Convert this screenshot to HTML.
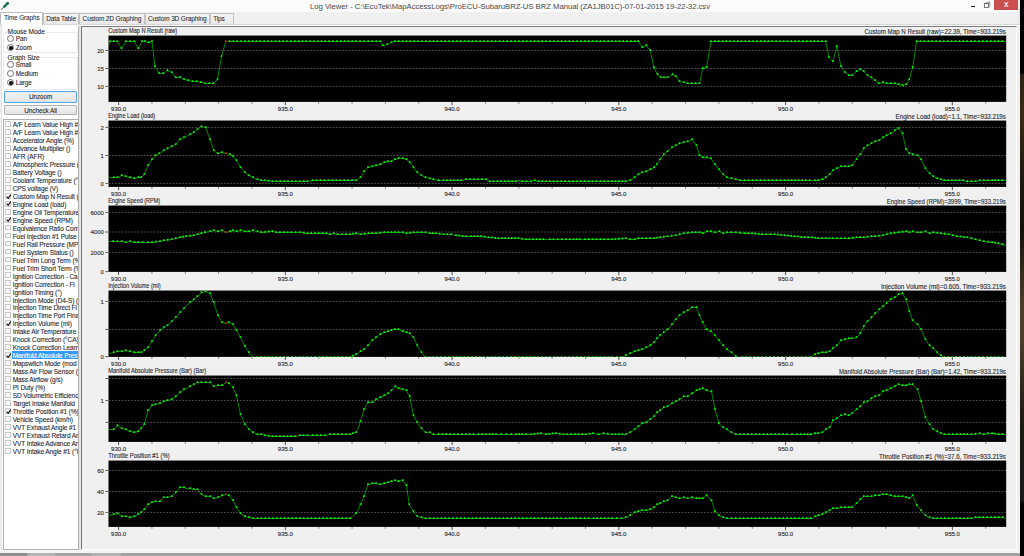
<!DOCTYPE html>
<html><head><meta charset="utf-8"><title>Log Viewer</title>
<style>
html,body{margin:0;padding:0}
body{width:1024px;height:556px;overflow:hidden;position:relative;background:#f0f0f0;font-family:"Liberation Sans",sans-serif;font-size:6.2px;color:#2a2a30}
div,span{box-sizing:border-box}
.abs{position:absolute}
#titlebar{left:0;top:0;width:1020px;height:11.5px;background:#fbfbfb}
#title{left:0;top:1.9px;width:1020px;text-align:center;font-size:7.75px;color:#4a4a4a;letter-spacing:-0.06px;white-space:nowrap}
#close{left:994.2px;top:0;width:23.7px;height:9.7px;background:#c9504f;color:#f8e4e4;text-align:center;font-size:8.2px;line-height:9.4px;font-weight:bold;padding-left:0.6px}
#wall{left:1019.9px;top:0;width:4.2px;height:556px;background:linear-gradient(#000 0,#000 73px,#2a2216 75px,#3a2c16 115px,#1c1812 180px,#14110c 230px,#4a3c2a 300px,#4a3d2c 340px,#1e1b15 420px,#1a1a1a 500px,#000 505px,#000 556px)}
#wborder{left:1017.6px;top:0;width:2.4px;height:553.2px;background:linear-gradient(90deg,#f2f2f2,#e0e0e0)}
#taskbar{left:0;top:553.2px;width:1020px;height:3px;background:linear-gradient(90deg,#8e8e8e 0,#8e8e8e 27px,#b4b4b4 28px,#b4b4b4 54px,#a4a4a4 56px,#a4a4a4 91px,#b2b2b2 92px,#b2b2b2 120px,#a2a2a2 122px)}
#wbottom{left:0;top:550px;width:1020px;height:3.2px;background:#f4f4f4}
.tab{top:13.3px;height:10.4px;border:0.6px solid #c2c2c2;border-bottom:none;background:linear-gradient(#f3f3f3,#e9e9e9);white-space:nowrap;text-align:center;line-height:9.8px;font-size:6.5px;letter-spacing:-0.14px;-webkit-text-stroke:0.06px #2a2a30}
.tab.on{top:12px;height:12.6px;background:#fff;border-color:#bcbcbc;line-height:9.6px}
#page{left:0.5px;top:24.2px;width:1019px;height:526px;background:#fff;border-left:0.6px solid #e0e0e0}
#split{left:78.1px;top:26.1px;width:3.2px;height:524.1px;background:linear-gradient(90deg,#b0b0b0 0,#b8b8b8 1px,#e2e2e2 1.2px,#e8e8e8 2.5px,#fcfcfc 2.6px)}
#rfill{left:1017px;top:26.1px;width:3px;height:524.1px;background:#f0f0f0}
#tabline{left:43px;top:23.6px;width:977px;height:0.6px;background:#d8d8d8}
#panel{left:81.3px;top:26.2px;width:936px;height:523.9px;border-left:0.9px solid #747474;border-top:0.9px solid #7c7c7c;border-right:0.8px solid #fdfdfd;border-bottom:0.8px solid #fdfdfd;background:#f0f0f0}
.grp{left:3.4px;width:75px;border:0.6px solid #e9e9e9;border-radius:1px}
.gl{background:#fff;padding:0 0.8px;font-size:6.6px;letter-spacing:-0.1px;white-space:nowrap;line-height:7px;-webkit-text-stroke:0.1px #2a2a30}
.rad{width:7px;height:7px;border-radius:50%;border:0.6px solid #707070;background:#fff}
  .rad.on::after{content:"";position:absolute;left:1.15px;top:1.15px;width:3.5px;height:3.5px;border-radius:50%;background:#111}
.rl{font-size:6.4px;letter-spacing:-0.1px;line-height:7px;white-space:nowrap;-webkit-text-stroke:0.1px #2a2a30}
.btn{left:4.2px;width:72.8px;border:0.6px solid #b2b2b2;background:linear-gradient(#f3f3f3,#e4e4e4);text-align:center;font-size:6.4px;letter-spacing:-0.08px;border-radius:1px;-webkit-text-stroke:0.1px #2a2a30}
.lb{position:absolute;left:2.6px;top:118.6px;width:76px;height:431.4px;border:0.8px solid #b0b0b0;background:#fff;overflow:hidden;padding-top:0.6px}
.it{height:7.98px;position:relative;white-space:nowrap}
.cb{position:absolute;left:1.9px;top:0.9px;width:5.8px;height:5.8px;border:0.55px solid #c8c8c8;background:#fff;line-height:0}
.cb svg{position:absolute;left:-0.3px;top:-0.3px}
.tx{position:absolute;left:8.3px;top:0;height:7.98px;line-height:9.1px;font-size:6.55px;letter-spacing:-0.1px;padding:0 0.8px;-webkit-text-stroke:0.1px #2a2a30}
.tx.sel{background:#3399ff;color:#fff;-webkit-text-stroke:0.1px #fff;left:8.4px;padding-left:0.7px;right:0;overflow:hidden}
.gsvg{position:absolute;left:0;top:0}
.gsvg text{stroke:#303038;stroke-width:0.14px}
</style></head><body>
<div id="titlebar" class="abs"></div>
<svg class="abs" style="left:0;top:0" width="11" height="11" viewBox="0 0 11 11"><path d="M1.4 9.7 L3.3 7.4" stroke="#222" stroke-width="0.9" fill="none"/><path d="M3 7.6 L3.1 6.1 L6.4 2.4 L8.2 2 L9 3.6 L5.9 7.1 L4.3 7.9 Z" fill="#1d7a5c"/><path d="M6.5 2.3 L8.2 2 L9 3.6 L8 4.7 Z" fill="#2a4038"/></svg>
<div id="title" class="abs">Log Viewer - C:\EcuTek\MapAccessLogs\ProECU-SubaruBRZ-US BRZ Manual (ZA1JB01C)-07-01-2015 19-22-32.csv</div>
<div class="abs" style="left:970.9px;top:5.9px;width:4.1px;height:1.1px;background:#1c1c1c"></div>
<svg class="abs" style="left:982px;top:0" width="10" height="10" viewBox="0 0 10 10"><path d="M3.5 3.4 L4.7 2.3 L7.8 2.3 L7.8 6.4 L6.6 7.5" fill="none" stroke="#555" stroke-width="0.6"/><path d="M6.5 3.4 L7.8 2.3" stroke="#666" stroke-width="0.5"/><rect x="2.3" y="3.5" width="4.2" height="4" fill="#fdfdfd" stroke="#3c3c3c" stroke-width="0.7"/></svg>
<div id="close" class="abs">x</div>
<div id="wborder" class="abs"></div>
<div id="wall" class="abs"></div>
<div id="wbottom" class="abs"></div>
<div id="taskbar" class="abs"></div>

<div id="page" class="abs"></div><div id="split" class="abs"></div><div id="rfill" class="abs"></div>
<div id="tabline" class="abs"></div>
<div class="abs tab" style="left:43px;width:36.2px">Data Table</div>
<div class="abs tab" style="left:79.2px;width:65.4px">Custom 2D Graphing</div>
<div class="abs tab" style="left:144.6px;width:65.2px">Custom 3D Graphing</div>
<div class="abs tab" style="left:209.8px;width:23.8px;padding-right:5.5px">Tips</div>
<div class="abs tab on" style="left:0.2px;width:43.2px">Time Graphs</div>

<div class="abs grp" style="top:31.6px;height:21px"></div>
<div class="abs gl" style="left:6.8px;top:27.6px">Mouse Mode</div>
<div class="abs rad" style="left:7.1px;top:35.3px"></div><div class="abs rl" style="left:15.8px;top:35px">Pan</div>
<div class="abs rad on" style="left:7.1px;top:43.9px"></div><div class="abs rl" style="left:15.8px;top:43.6px">Zoom</div>
<div class="abs grp" style="top:57.2px;height:32.4px"></div>
<div class="abs gl" style="left:6.8px;top:54px">Graph Size</div>
<div class="abs rad" style="left:7.1px;top:61.4px"></div><div class="abs rl" style="left:15.8px;top:61.1px">Small</div>
<div class="abs rad" style="left:7.1px;top:69.9px"></div><div class="abs rl" style="left:15.8px;top:69.6px">Medium</div>
<div class="abs rad on" style="left:7.1px;top:79.1px"></div><div class="abs rl" style="left:15.8px;top:78.8px">Large</div>
<div class="abs btn" style="top:91.4px;height:11.2px;line-height:10.4px;border-color:#5aa7e8;box-shadow:inset 0 0 0 0.5px #bfe0fa">Unzoom</div>
<div class="abs btn" style="top:105.2px;height:9.8px;line-height:9px">Uncheck All</div>
<div class="lb">
<div class="it"><span class="cb"></span><span class="tx">A/F Learn Value High #</span></div>
<div class="it"><span class="cb"></span><span class="tx">A/F Learn Value High #</span></div>
<div class="it"><span class="cb"></span><span class="tx">Accelerator Angle (%)</span></div>
<div class="it"><span class="cb"></span><span class="tx">Advance Multiplier ()</span></div>
<div class="it"><span class="cb"></span><span class="tx">AFR (AFR)</span></div>
<div class="it"><span class="cb"></span><span class="tx">Atmospheric Pressure (</span></div>
<div class="it"><span class="cb"></span><span class="tx">Battery Voltage ()</span></div>
<div class="it"><span class="cb"></span><span class="tx">Coolant Temperature (°</span></div>
<div class="it"><span class="cb"></span><span class="tx">CPS voltage (V)</span></div>
<div class="it"><span class="cb"><svg viewBox="0 0 7 7" width="5.4" height="5.4"><path d="M0.9 3.3 L2.8 5.6 L6.3 0.9" fill="none" stroke="#111" stroke-width="1.5"/></svg></span><span class="tx">Custom Map N Result (</span></div>
<div class="it"><span class="cb"><svg viewBox="0 0 7 7" width="5.4" height="5.4"><path d="M0.9 3.3 L2.8 5.6 L6.3 0.9" fill="none" stroke="#111" stroke-width="1.5"/></svg></span><span class="tx">Engine Load (load)</span></div>
<div class="it"><span class="cb"></span><span class="tx">Engine Oil Temperature</span></div>
<div class="it"><span class="cb"><svg viewBox="0 0 7 7" width="5.4" height="5.4"><path d="M0.9 3.3 L2.8 5.6 L6.3 0.9" fill="none" stroke="#111" stroke-width="1.5"/></svg></span><span class="tx">Engine Speed (RPM)</span></div>
<div class="it"><span class="cb"></span><span class="tx">Equivalence Ratio Com</span></div>
<div class="it"><span class="cb"></span><span class="tx">Fuel Injection #1 Pulse</span></div>
<div class="it"><span class="cb"></span><span class="tx">Fuel Rail Pressure (MPa</span></div>
<div class="it"><span class="cb"></span><span class="tx">Fuel System Status ()</span></div>
<div class="it"><span class="cb"></span><span class="tx">Fuel Trim Long Term (%</span></div>
<div class="it"><span class="cb"></span><span class="tx">Fuel Trim Short Term (%</span></div>
<div class="it"><span class="cb"></span><span class="tx">Ignition Correction - Ca</span></div>
<div class="it"><span class="cb"></span><span class="tx">Ignition Correction - Fi</span></div>
<div class="it"><span class="cb"></span><span class="tx">Ignition Timing (°)</span></div>
<div class="it"><span class="cb"></span><span class="tx">Injection Mode (D4-S) (</span></div>
<div class="it"><span class="cb"></span><span class="tx">Injection Time Direct Fi</span></div>
<div class="it"><span class="cb"></span><span class="tx">Injection Time Port Fina</span></div>
<div class="it"><span class="cb"><svg viewBox="0 0 7 7" width="5.4" height="5.4"><path d="M0.9 3.3 L2.8 5.6 L6.3 0.9" fill="none" stroke="#111" stroke-width="1.5"/></svg></span><span class="tx">Injection Volume (ml)</span></div>
<div class="it"><span class="cb"></span><span class="tx">Intake Air Temperature</span></div>
<div class="it"><span class="cb"></span><span class="tx">Knock Correction (°CA)</span></div>
<div class="it"><span class="cb"></span><span class="tx">Knock Correction Learn</span></div>
<div class="it"><span class="cb"><svg viewBox="0 0 7 7" width="5.4" height="5.4"><path d="M0.9 3.3 L2.8 5.6 L6.3 0.9" fill="none" stroke="#111" stroke-width="1.5"/></svg></span><span class="tx sel">Manifold Absolute Pres</span></div>
<div class="it"><span class="cb"></span><span class="tx">Mapswitch Mode (mod</span></div>
<div class="it"><span class="cb"></span><span class="tx">Mass Air Flow Sensor (V</span></div>
<div class="it"><span class="cb"></span><span class="tx">Mass Airflow (g/s)</span></div>
<div class="it"><span class="cb"></span><span class="tx">PI Duty (%)</span></div>
<div class="it"><span class="cb"></span><span class="tx">SD Volumetric Efficienc</span></div>
<div class="it"><span class="cb"></span><span class="tx">Target Intake Manifold</span></div>
<div class="it"><span class="cb"><svg viewBox="0 0 7 7" width="5.4" height="5.4"><path d="M0.9 3.3 L2.8 5.6 L6.3 0.9" fill="none" stroke="#111" stroke-width="1.5"/></svg></span><span class="tx">Throttle Position #1 (%)</span></div>
<div class="it"><span class="cb"></span><span class="tx">Vehicle Speed (km/h)</span></div>
<div class="it"><span class="cb"></span><span class="tx">VVT Exhaust Angle #1 (</span></div>
<div class="it"><span class="cb"></span><span class="tx">VVT Exhaust Retard Ang</span></div>
<div class="it"><span class="cb"></span><span class="tx">VVT Intake Advance An</span></div>
<div class="it"><span class="cb"></span><span class="tx">VVT Intake Angle #1 (°F</span></div>
</div>
<div id="panel" class="abs"></div>
<svg class="gsvg" width="1024" height="556" viewBox="0 0 1024 556" font-family="'Liberation Sans',sans-serif" font-size="6">
<rect x="108.5" y="35.55" width="897.70" height="66.35" fill="#000"/>
<line x1="108.5" x2="1006.2" y1="50.45" y2="50.45" stroke="#848484" stroke-width="0.62" stroke-dasharray="1.75 1.45"/>
<line x1="105.3" x2="108.5" y1="50.45" y2="50.45" stroke="#151515" stroke-width="0.65"/>
<text x="103.9" y="52.55" text-anchor="end" fill="#303038">20</text>
<line x1="108.5" x2="1006.2" y1="68.5" y2="68.5" stroke="#848484" stroke-width="0.62" stroke-dasharray="1.75 1.45"/>
<line x1="105.3" x2="108.5" y1="68.5" y2="68.5" stroke="#151515" stroke-width="0.65"/>
<text x="103.9" y="70.60" text-anchor="end" fill="#303038">15</text>
<line x1="108.5" x2="1006.2" y1="86.4" y2="86.4" stroke="#848484" stroke-width="0.62" stroke-dasharray="1.75 1.45"/>
<line x1="105.3" x2="108.5" y1="86.4" y2="86.4" stroke="#151515" stroke-width="0.65"/>
<text x="103.9" y="88.50" text-anchor="end" fill="#303038">10</text>
<line x1="118.60" x2="118.60" y1="101.90" y2="105.10" stroke="#1c1c1c" stroke-width="0.75"/>
<text x="118.60" y="111.30" text-anchor="middle" fill="#303038">930.0</text>
<line x1="151.95" x2="151.95" y1="101.90" y2="103.80" stroke="#383838" stroke-width="0.6"/>
<line x1="185.30" x2="185.30" y1="101.90" y2="103.80" stroke="#383838" stroke-width="0.6"/>
<line x1="218.65" x2="218.65" y1="101.90" y2="103.80" stroke="#383838" stroke-width="0.6"/>
<line x1="252.00" x2="252.00" y1="101.90" y2="103.80" stroke="#383838" stroke-width="0.6"/>
<line x1="285.35" x2="285.35" y1="101.90" y2="105.10" stroke="#1c1c1c" stroke-width="0.75"/>
<text x="285.35" y="111.30" text-anchor="middle" fill="#303038">935.0</text>
<line x1="318.70" x2="318.70" y1="101.90" y2="103.80" stroke="#383838" stroke-width="0.6"/>
<line x1="352.05" x2="352.05" y1="101.90" y2="103.80" stroke="#383838" stroke-width="0.6"/>
<line x1="385.40" x2="385.40" y1="101.90" y2="103.80" stroke="#383838" stroke-width="0.6"/>
<line x1="418.75" x2="418.75" y1="101.90" y2="103.80" stroke="#383838" stroke-width="0.6"/>
<line x1="452.10" x2="452.10" y1="101.90" y2="105.10" stroke="#1c1c1c" stroke-width="0.75"/>
<text x="452.10" y="111.30" text-anchor="middle" fill="#303038">940.0</text>
<line x1="485.45" x2="485.45" y1="101.90" y2="103.80" stroke="#383838" stroke-width="0.6"/>
<line x1="518.80" x2="518.80" y1="101.90" y2="103.80" stroke="#383838" stroke-width="0.6"/>
<line x1="552.15" x2="552.15" y1="101.90" y2="103.80" stroke="#383838" stroke-width="0.6"/>
<line x1="585.50" x2="585.50" y1="101.90" y2="103.80" stroke="#383838" stroke-width="0.6"/>
<line x1="618.85" x2="618.85" y1="101.90" y2="105.10" stroke="#1c1c1c" stroke-width="0.75"/>
<text x="618.85" y="111.30" text-anchor="middle" fill="#303038">945.0</text>
<line x1="652.20" x2="652.20" y1="101.90" y2="103.80" stroke="#383838" stroke-width="0.6"/>
<line x1="685.55" x2="685.55" y1="101.90" y2="103.80" stroke="#383838" stroke-width="0.6"/>
<line x1="718.90" x2="718.90" y1="101.90" y2="103.80" stroke="#383838" stroke-width="0.6"/>
<line x1="752.25" x2="752.25" y1="101.90" y2="103.80" stroke="#383838" stroke-width="0.6"/>
<line x1="785.60" x2="785.60" y1="101.90" y2="105.10" stroke="#1c1c1c" stroke-width="0.75"/>
<text x="785.60" y="111.30" text-anchor="middle" fill="#303038">950.0</text>
<line x1="818.95" x2="818.95" y1="101.90" y2="103.80" stroke="#383838" stroke-width="0.6"/>
<line x1="852.30" x2="852.30" y1="101.90" y2="103.80" stroke="#383838" stroke-width="0.6"/>
<line x1="885.65" x2="885.65" y1="101.90" y2="103.80" stroke="#383838" stroke-width="0.6"/>
<line x1="919.00" x2="919.00" y1="101.90" y2="103.80" stroke="#383838" stroke-width="0.6"/>
<line x1="952.35" x2="952.35" y1="101.90" y2="105.10" stroke="#1c1c1c" stroke-width="0.75"/>
<text x="952.35" y="111.30" text-anchor="middle" fill="#303038">955.0</text>
<line x1="985.70" x2="985.70" y1="101.90" y2="103.80" stroke="#383838" stroke-width="0.6"/>
<text x="108.2" y="32.95" font-size="6.6" fill="#303038" textLength="69" lengthAdjust="spacingAndGlyphs">Custom Map N Result (raw)</text>
<text x="1005.90" y="33.55" font-size="6.6" text-anchor="end" fill="#303038" textLength="141.4" lengthAdjust="spacingAndGlyphs">Custom Map N Result (raw)=22.39, Time=933.219s</text>
<clipPath id="cp0"><rect x="108.5" y="35.55" width="897.70" height="66.35"/></clipPath>
<g clip-path="url(#cp0)">
<polyline points="108.75,45.5 110.0,41.5 117.5,41.5 121.5,48.5 125.75,41.5 130.0,41.5 134.25,41.5 138.25,48.5 142.0,41.5 145.0,41.5 146.75,42.5 148.75,42.5 152.0,41.5 155.0,66.5 159.25,73.5 163.25,73.5 167.5,70.5 171.75,72.5 175.75,77.5 180.0,77.5 184.0,79.5 188.25,80.5 192.5,81.5 196.5,81.5 200.75,82.5 205.0,83.5 213.25,83.5 217.5,79.5 221.5,56.5 225.75,41.5 356.0,41.5 380.25,41.5 383.0,45.5 387.25,44.5 391.5,42.5 394.75,41.5 612.0,41.5 638.25,41.5 642.25,47.5 646.25,45.5 650.25,50.5 654.0,67.5 657.5,74.5 660.75,77.5 664.0,77.5 667.5,77.5 672.5,74.5 675.75,76.5 679.5,81.5 683.75,82.5 687.75,83.5 699.5,83.5 702.75,68.5 706.5,67.5 711.0,41.5 825.75,41.5 828.98,57.5 832.91,61.5 836.84,46.5 840.99,66.5 845.13,72.5 848.85,75.5 851.96,75.5 856.51,71.5 860.24,69.5 863.76,71.5 867.49,75.5 871.42,77.5 875.15,80.5 878.87,83.5 883.01,82.5 886.53,83.5 894.82,83.5 898.54,84.5 902.48,85.5 906.2,84.5 909.31,79.5 912.62,67.5 916.55,41.5 1006.2,41.5" fill="none" stroke="#00f000" stroke-width="0.56" stroke-linejoin="round"/>
<path d="M109.18 40.25h1.64v1.75h-1.64zM112.93 40.25h1.64v1.75h-1.64zM116.68 40.25h1.64v1.75h-1.64zM120.68 47.25h1.64v1.75h-1.64zM124.93 40.25h1.64v1.75h-1.64zM129.18 40.25h1.64v1.75h-1.64zM133.43 40.25h1.64v1.75h-1.64zM137.43 47.25h1.64v1.75h-1.64zM141.18 40.25h1.64v1.75h-1.64zM144.18 40.25h1.64v1.75h-1.64zM147.93 41.25h1.64v1.75h-1.64zM151.18 40.25h1.64v1.75h-1.64zM154.18 65.25h1.64v1.75h-1.64zM158.43 72.25h1.64v1.75h-1.64zM162.43 72.25h1.64v1.75h-1.64zM166.68 69.25h1.64v1.75h-1.64zM170.93 71.25h1.64v1.75h-1.64zM174.93 76.25h1.64v1.75h-1.64zM179.18 76.25h1.64v1.75h-1.64zM183.18 78.25h1.64v1.75h-1.64zM187.43 79.25h1.64v1.75h-1.64zM191.68 80.25h1.64v1.75h-1.64zM195.68 80.25h1.64v1.75h-1.64zM199.93 81.25h1.64v1.75h-1.64zM204.18 82.25h1.64v1.75h-1.64zM208.31 82.25h1.64v1.75h-1.64zM212.43 82.25h1.64v1.75h-1.64zM216.68 78.25h1.64v1.75h-1.64zM220.68 55.25h1.64v1.75h-1.64zM228.76 40.25h1.64v1.75h-1.64zM232.59 40.25h1.64v1.75h-1.64zM236.42 40.25h1.64v1.75h-1.64zM240.25 40.25h1.64v1.75h-1.64zM244.08 40.25h1.64v1.75h-1.64zM247.92 40.25h1.64v1.75h-1.64zM251.75 40.25h1.64v1.75h-1.64zM255.58 40.25h1.64v1.75h-1.64zM259.41 40.25h1.64v1.75h-1.64zM263.24 40.25h1.64v1.75h-1.64zM267.07 40.25h1.64v1.75h-1.64zM270.90 40.25h1.64v1.75h-1.64zM274.73 40.25h1.64v1.75h-1.64zM278.56 40.25h1.64v1.75h-1.64zM282.39 40.25h1.64v1.75h-1.64zM286.22 40.25h1.64v1.75h-1.64zM290.06 40.25h1.64v1.75h-1.64zM293.89 40.25h1.64v1.75h-1.64zM297.72 40.25h1.64v1.75h-1.64zM301.55 40.25h1.64v1.75h-1.64zM305.38 40.25h1.64v1.75h-1.64zM309.21 40.25h1.64v1.75h-1.64zM313.04 40.25h1.64v1.75h-1.64zM316.87 40.25h1.64v1.75h-1.64zM320.70 40.25h1.64v1.75h-1.64zM324.53 40.25h1.64v1.75h-1.64zM328.36 40.25h1.64v1.75h-1.64zM332.19 40.25h1.64v1.75h-1.64zM336.03 40.25h1.64v1.75h-1.64zM339.86 40.25h1.64v1.75h-1.64zM343.69 40.25h1.64v1.75h-1.64zM347.52 40.25h1.64v1.75h-1.64zM351.35 40.25h1.64v1.75h-1.64zM355.18 40.25h1.64v1.75h-1.64zM359.22 40.25h1.64v1.75h-1.64zM363.26 40.25h1.64v1.75h-1.64zM367.31 40.25h1.64v1.75h-1.64zM371.35 40.25h1.64v1.75h-1.64zM375.39 40.25h1.64v1.75h-1.64zM379.43 40.25h1.64v1.75h-1.64zM382.18 44.25h1.64v1.75h-1.64zM386.43 43.25h1.64v1.75h-1.64zM390.68 41.25h1.64v1.75h-1.64zM393.93 40.25h1.64v1.75h-1.64zM397.81 40.25h1.64v1.75h-1.64zM401.69 40.25h1.64v1.75h-1.64zM405.57 40.25h1.64v1.75h-1.64zM409.45 40.25h1.64v1.75h-1.64zM413.33 40.25h1.64v1.75h-1.64zM417.21 40.25h1.64v1.75h-1.64zM421.09 40.25h1.64v1.75h-1.64zM424.97 40.25h1.64v1.75h-1.64zM428.85 40.25h1.64v1.75h-1.64zM432.72 40.25h1.64v1.75h-1.64zM436.60 40.25h1.64v1.75h-1.64zM440.48 40.25h1.64v1.75h-1.64zM444.36 40.25h1.64v1.75h-1.64zM448.24 40.25h1.64v1.75h-1.64zM452.12 40.25h1.64v1.75h-1.64zM456.00 40.25h1.64v1.75h-1.64zM459.88 40.25h1.64v1.75h-1.64zM463.76 40.25h1.64v1.75h-1.64zM467.64 40.25h1.64v1.75h-1.64zM471.52 40.25h1.64v1.75h-1.64zM475.40 40.25h1.64v1.75h-1.64zM479.28 40.25h1.64v1.75h-1.64zM483.16 40.25h1.64v1.75h-1.64zM487.04 40.25h1.64v1.75h-1.64zM490.92 40.25h1.64v1.75h-1.64zM494.80 40.25h1.64v1.75h-1.64zM498.68 40.25h1.64v1.75h-1.64zM502.56 40.25h1.64v1.75h-1.64zM506.43 40.25h1.64v1.75h-1.64zM510.31 40.25h1.64v1.75h-1.64zM514.19 40.25h1.64v1.75h-1.64zM518.07 40.25h1.64v1.75h-1.64zM521.95 40.25h1.64v1.75h-1.64zM525.83 40.25h1.64v1.75h-1.64zM529.71 40.25h1.64v1.75h-1.64zM533.59 40.25h1.64v1.75h-1.64zM537.47 40.25h1.64v1.75h-1.64zM541.35 40.25h1.64v1.75h-1.64zM545.23 40.25h1.64v1.75h-1.64zM549.11 40.25h1.64v1.75h-1.64zM552.99 40.25h1.64v1.75h-1.64zM556.87 40.25h1.64v1.75h-1.64zM560.75 40.25h1.64v1.75h-1.64zM564.63 40.25h1.64v1.75h-1.64zM568.51 40.25h1.64v1.75h-1.64zM572.39 40.25h1.64v1.75h-1.64zM576.26 40.25h1.64v1.75h-1.64zM580.14 40.25h1.64v1.75h-1.64zM584.02 40.25h1.64v1.75h-1.64zM587.90 40.25h1.64v1.75h-1.64zM591.78 40.25h1.64v1.75h-1.64zM595.66 40.25h1.64v1.75h-1.64zM599.54 40.25h1.64v1.75h-1.64zM603.42 40.25h1.64v1.75h-1.64zM607.30 40.25h1.64v1.75h-1.64zM611.18 40.25h1.64v1.75h-1.64zM614.93 40.25h1.64v1.75h-1.64zM618.68 40.25h1.64v1.75h-1.64zM622.43 40.25h1.64v1.75h-1.64zM626.18 40.25h1.64v1.75h-1.64zM629.93 40.25h1.64v1.75h-1.64zM633.68 40.25h1.64v1.75h-1.64zM637.43 40.25h1.64v1.75h-1.64zM641.43 46.25h1.64v1.75h-1.64zM645.43 44.25h1.64v1.75h-1.64zM649.43 49.25h1.64v1.75h-1.64zM653.18 66.25h1.64v1.75h-1.64zM656.68 73.25h1.64v1.75h-1.64zM659.93 76.25h1.64v1.75h-1.64zM663.18 76.25h1.64v1.75h-1.64zM666.68 76.25h1.64v1.75h-1.64zM671.68 73.25h1.64v1.75h-1.64zM674.93 75.25h1.64v1.75h-1.64zM678.68 80.25h1.64v1.75h-1.64zM682.93 81.25h1.64v1.75h-1.64zM686.93 82.25h1.64v1.75h-1.64zM690.85 82.25h1.64v1.75h-1.64zM694.76 82.25h1.64v1.75h-1.64zM698.68 82.25h1.64v1.75h-1.64zM701.93 67.25h1.64v1.75h-1.64zM705.68 66.25h1.64v1.75h-1.64zM710.18 40.25h1.64v1.75h-1.64zM714.00 40.25h1.64v1.75h-1.64zM717.83 40.25h1.64v1.75h-1.64zM721.65 40.25h1.64v1.75h-1.64zM725.48 40.25h1.64v1.75h-1.64zM729.30 40.25h1.64v1.75h-1.64zM733.13 40.25h1.64v1.75h-1.64zM736.95 40.25h1.64v1.75h-1.64zM740.78 40.25h1.64v1.75h-1.64zM744.60 40.25h1.64v1.75h-1.64zM748.43 40.25h1.64v1.75h-1.64zM752.25 40.25h1.64v1.75h-1.64zM756.08 40.25h1.64v1.75h-1.64zM759.90 40.25h1.64v1.75h-1.64zM763.73 40.25h1.64v1.75h-1.64zM767.55 40.25h1.64v1.75h-1.64zM771.38 40.25h1.64v1.75h-1.64zM775.20 40.25h1.64v1.75h-1.64zM779.03 40.25h1.64v1.75h-1.64zM782.85 40.25h1.64v1.75h-1.64zM786.68 40.25h1.64v1.75h-1.64zM790.50 40.25h1.64v1.75h-1.64zM794.33 40.25h1.64v1.75h-1.64zM798.15 40.25h1.64v1.75h-1.64zM801.98 40.25h1.64v1.75h-1.64zM805.80 40.25h1.64v1.75h-1.64zM809.63 40.25h1.64v1.75h-1.64zM813.45 40.25h1.64v1.75h-1.64zM817.28 40.25h1.64v1.75h-1.64zM821.10 40.25h1.64v1.75h-1.64zM824.93 40.25h1.64v1.75h-1.64zM828.16 56.25h1.64v1.75h-1.64zM832.09 60.25h1.64v1.75h-1.64zM836.02 45.25h1.64v1.75h-1.64zM840.17 65.25h1.64v1.75h-1.64zM844.31 71.25h1.64v1.75h-1.64zM848.03 74.25h1.64v1.75h-1.64zM851.14 74.25h1.64v1.75h-1.64zM855.69 70.25h1.64v1.75h-1.64zM859.42 68.25h1.64v1.75h-1.64zM862.94 70.25h1.64v1.75h-1.64zM866.67 74.25h1.64v1.75h-1.64zM870.60 76.25h1.64v1.75h-1.64zM874.33 79.25h1.64v1.75h-1.64zM878.05 82.25h1.64v1.75h-1.64zM882.19 81.25h1.64v1.75h-1.64zM885.71 82.25h1.64v1.75h-1.64zM889.85 82.25h1.64v1.75h-1.64zM894.00 82.25h1.64v1.75h-1.64zM897.72 83.25h1.64v1.75h-1.64zM901.66 84.25h1.64v1.75h-1.64zM905.38 83.25h1.64v1.75h-1.64zM908.49 78.25h1.64v1.75h-1.64zM911.80 66.25h1.64v1.75h-1.64zM915.73 40.25h1.64v1.75h-1.64zM919.63 40.25h1.64v1.75h-1.64zM923.53 40.25h1.64v1.75h-1.64zM927.42 40.25h1.64v1.75h-1.64zM931.32 40.25h1.64v1.75h-1.64zM935.22 40.25h1.64v1.75h-1.64zM939.12 40.25h1.64v1.75h-1.64zM943.01 40.25h1.64v1.75h-1.64zM946.91 40.25h1.64v1.75h-1.64zM950.81 40.25h1.64v1.75h-1.64zM954.71 40.25h1.64v1.75h-1.64zM958.61 40.25h1.64v1.75h-1.64zM962.50 40.25h1.64v1.75h-1.64zM966.40 40.25h1.64v1.75h-1.64zM970.30 40.25h1.64v1.75h-1.64zM974.20 40.25h1.64v1.75h-1.64zM978.10 40.25h1.64v1.75h-1.64zM981.99 40.25h1.64v1.75h-1.64zM985.89 40.25h1.64v1.75h-1.64zM989.79 40.25h1.64v1.75h-1.64zM993.69 40.25h1.64v1.75h-1.64zM997.58 40.25h1.64v1.75h-1.64zM1001.48 40.25h1.64v1.75h-1.64z" fill="#00ff00"/>
<rect x="224.80" y="40.10" width="1.9" height="1.9" fill="#b01a0a"/>
</g>
<rect x="108.5" y="120.55" width="897.70" height="66.35" fill="#000"/>
<line x1="108.5" x2="1006.2" y1="127.4" y2="127.4" stroke="#848484" stroke-width="0.62" stroke-dasharray="1.75 1.45"/>
<line x1="105.3" x2="108.5" y1="127.4" y2="127.4" stroke="#151515" stroke-width="0.65"/>
<text x="103.9" y="129.50" text-anchor="end" fill="#303038">2</text>
<line x1="108.5" x2="1006.2" y1="155.5" y2="155.5" stroke="#848484" stroke-width="0.62" stroke-dasharray="1.75 1.45"/>
<line x1="105.3" x2="108.5" y1="155.5" y2="155.5" stroke="#151515" stroke-width="0.65"/>
<text x="103.9" y="157.60" text-anchor="end" fill="#303038">1</text>
<line x1="108.5" x2="1006.2" y1="183.45" y2="183.45" stroke="#848484" stroke-width="0.62" stroke-dasharray="1.75 1.45"/>
<line x1="105.3" x2="108.5" y1="183.45" y2="183.45" stroke="#151515" stroke-width="0.65"/>
<text x="103.9" y="185.55" text-anchor="end" fill="#303038">0</text>
<line x1="118.60" x2="118.60" y1="186.90" y2="190.10" stroke="#1c1c1c" stroke-width="0.75"/>
<text x="118.60" y="196.30" text-anchor="middle" fill="#303038">930.0</text>
<line x1="151.95" x2="151.95" y1="186.90" y2="188.80" stroke="#383838" stroke-width="0.6"/>
<line x1="185.30" x2="185.30" y1="186.90" y2="188.80" stroke="#383838" stroke-width="0.6"/>
<line x1="218.65" x2="218.65" y1="186.90" y2="188.80" stroke="#383838" stroke-width="0.6"/>
<line x1="252.00" x2="252.00" y1="186.90" y2="188.80" stroke="#383838" stroke-width="0.6"/>
<line x1="285.35" x2="285.35" y1="186.90" y2="190.10" stroke="#1c1c1c" stroke-width="0.75"/>
<text x="285.35" y="196.30" text-anchor="middle" fill="#303038">935.0</text>
<line x1="318.70" x2="318.70" y1="186.90" y2="188.80" stroke="#383838" stroke-width="0.6"/>
<line x1="352.05" x2="352.05" y1="186.90" y2="188.80" stroke="#383838" stroke-width="0.6"/>
<line x1="385.40" x2="385.40" y1="186.90" y2="188.80" stroke="#383838" stroke-width="0.6"/>
<line x1="418.75" x2="418.75" y1="186.90" y2="188.80" stroke="#383838" stroke-width="0.6"/>
<line x1="452.10" x2="452.10" y1="186.90" y2="190.10" stroke="#1c1c1c" stroke-width="0.75"/>
<text x="452.10" y="196.30" text-anchor="middle" fill="#303038">940.0</text>
<line x1="485.45" x2="485.45" y1="186.90" y2="188.80" stroke="#383838" stroke-width="0.6"/>
<line x1="518.80" x2="518.80" y1="186.90" y2="188.80" stroke="#383838" stroke-width="0.6"/>
<line x1="552.15" x2="552.15" y1="186.90" y2="188.80" stroke="#383838" stroke-width="0.6"/>
<line x1="585.50" x2="585.50" y1="186.90" y2="188.80" stroke="#383838" stroke-width="0.6"/>
<line x1="618.85" x2="618.85" y1="186.90" y2="190.10" stroke="#1c1c1c" stroke-width="0.75"/>
<text x="618.85" y="196.30" text-anchor="middle" fill="#303038">945.0</text>
<line x1="652.20" x2="652.20" y1="186.90" y2="188.80" stroke="#383838" stroke-width="0.6"/>
<line x1="685.55" x2="685.55" y1="186.90" y2="188.80" stroke="#383838" stroke-width="0.6"/>
<line x1="718.90" x2="718.90" y1="186.90" y2="188.80" stroke="#383838" stroke-width="0.6"/>
<line x1="752.25" x2="752.25" y1="186.90" y2="188.80" stroke="#383838" stroke-width="0.6"/>
<line x1="785.60" x2="785.60" y1="186.90" y2="190.10" stroke="#1c1c1c" stroke-width="0.75"/>
<text x="785.60" y="196.30" text-anchor="middle" fill="#303038">950.0</text>
<line x1="818.95" x2="818.95" y1="186.90" y2="188.80" stroke="#383838" stroke-width="0.6"/>
<line x1="852.30" x2="852.30" y1="186.90" y2="188.80" stroke="#383838" stroke-width="0.6"/>
<line x1="885.65" x2="885.65" y1="186.90" y2="188.80" stroke="#383838" stroke-width="0.6"/>
<line x1="919.00" x2="919.00" y1="186.90" y2="188.80" stroke="#383838" stroke-width="0.6"/>
<line x1="952.35" x2="952.35" y1="186.90" y2="190.10" stroke="#1c1c1c" stroke-width="0.75"/>
<text x="952.35" y="196.30" text-anchor="middle" fill="#303038">955.0</text>
<line x1="985.70" x2="985.70" y1="186.90" y2="188.80" stroke="#383838" stroke-width="0.6"/>
<text x="108.2" y="117.95" font-size="6.6" fill="#303038" textLength="47" lengthAdjust="spacingAndGlyphs">Engine Load (load)</text>
<text x="1005.90" y="118.55" font-size="6.6" text-anchor="end" fill="#303038" textLength="110.3" lengthAdjust="spacingAndGlyphs">Engine Load (load)=1.1, Time=933.219s</text>
<clipPath id="cp1"><rect x="108.5" y="120.55" width="897.70" height="66.35"/></clipPath>
<g clip-path="url(#cp1)">
<polyline points="108.75,177.5 113.75,177.5 117.5,177.5 121.75,175.5 125.75,176.5 130.0,177.5 134.25,178.5 138.25,177.5 141.25,177.5 144.25,174.5 148.0,165.5 152.0,159.5 155.5,155.5 159.25,153.5 163.75,150.5 167.5,148.5 171.75,146.5 175.75,144.5 180.0,139.5 184.0,137.5 186.25,136.5 190.0,134.5 193.75,132.5 197.5,129.5 201.5,126.5 205.75,127.5 210.0,139.5 213.75,150.5 218.0,153.5 222.0,152.5 225.75,153.5 230.0,154.5 233.0,156.5 236.5,160.5 240.5,167.5 245.0,172.5 249.0,175.5 253.0,177.5 257.5,179.5 261.25,180.5 265.0,180.5 272.5,181.5 307.5,181.5 312.5,180.5 356.0,180.5 360.5,177.5 364.0,171.5 368.0,167.5 372.25,166.5 376.0,165.5 380.25,164.5 384.25,162.5 388.0,161.5 391.5,161.5 394.75,159.5 398.5,158.5 402.75,158.5 406.5,159.5 409.75,162.5 413.5,167.5 417.25,172.5 421.5,175.5 425.5,177.5 429.75,178.5 433.5,179.5 438.5,180.5 443.5,180.5 461.0,180.5 466.0,179.5 486.0,179.5 489.75,181.5 516.0,181.5 518.5,180.5 522.25,181.5 531.0,181.5 534.75,180.5 538.5,181.5 553.5,181.5 612.0,181.5 625.75,181.5 630.0,180.5 634.5,177.5 638.25,174.5 642.0,172.5 646.25,171.5 650.25,169.5 654.0,167.5 657.0,164.5 660.0,159.5 663.75,154.5 667.5,151.5 672.0,147.5 675.75,145.5 679.5,143.5 683.75,142.5 687.75,141.5 692.0,139.5 696.5,145.5 699.5,155.5 702.75,157.5 706.5,157.5 711.0,158.5 715.0,164.5 719.0,169.5 723.25,174.5 727.0,177.5 731.5,178.5 735.75,179.5 740.0,180.5 744.5,180.5 784.5,180.5 788.25,180.5 802.0,180.5 809.5,180.5 812.0,180.5 818.21,180.5 822.35,179.5 825.87,177.5 829.6,174.5 832.91,170.5 836.84,168.5 840.99,166.5 845.13,166.5 848.85,166.5 851.96,165.5 856.51,159.5 860.24,154.5 863.76,148.5 867.49,145.5 871.42,143.5 875.15,141.5 879.29,140.5 883.01,137.5 886.53,135.5 890.67,133.5 894.82,130.5 898.54,128.5 902.48,133.5 906.2,149.5 909.31,153.5 912.62,154.5 917.59,155.5 921.11,159.5 925.46,168.5 929.6,173.5 933.33,176.5 937.26,178.5 940.99,179.5 944.51,180.5 963.14,180.5 967.28,181.5 971.42,181.5 975.56,181.5 979.7,180.5 983.84,180.5 987.98,180.5 992.12,180.5 998.34,180.5 1006.2,180.5" fill="none" stroke="#00f000" stroke-width="0.56" stroke-linejoin="round"/>
<path d="M112.93 176.25h1.64v1.75h-1.64zM116.68 176.25h1.64v1.75h-1.64zM120.93 174.25h1.64v1.75h-1.64zM124.93 175.25h1.64v1.75h-1.64zM129.18 176.25h1.64v1.75h-1.64zM133.43 177.25h1.64v1.75h-1.64zM137.43 176.25h1.64v1.75h-1.64zM140.43 176.25h1.64v1.75h-1.64zM143.43 173.25h1.64v1.75h-1.64zM147.18 164.25h1.64v1.75h-1.64zM151.18 158.25h1.64v1.75h-1.64zM154.68 154.25h1.64v1.75h-1.64zM158.43 152.25h1.64v1.75h-1.64zM162.93 149.25h1.64v1.75h-1.64zM166.68 147.25h1.64v1.75h-1.64zM170.93 145.25h1.64v1.75h-1.64zM174.93 143.25h1.64v1.75h-1.64zM179.18 138.25h1.64v1.75h-1.64zM183.18 136.25h1.64v1.75h-1.64zM189.18 133.25h1.64v1.75h-1.64zM192.93 131.25h1.64v1.75h-1.64zM196.68 128.25h1.64v1.75h-1.64zM200.68 125.25h1.64v1.75h-1.64zM204.93 126.25h1.64v1.75h-1.64zM209.18 138.25h1.64v1.75h-1.64zM212.93 149.25h1.64v1.75h-1.64zM217.18 152.25h1.64v1.75h-1.64zM221.18 151.25h1.64v1.75h-1.64zM229.18 153.25h1.64v1.75h-1.64zM232.18 155.25h1.64v1.75h-1.64zM235.68 159.25h1.64v1.75h-1.64zM239.68 166.25h1.64v1.75h-1.64zM244.18 171.25h1.64v1.75h-1.64zM248.18 174.25h1.64v1.75h-1.64zM252.18 176.25h1.64v1.75h-1.64zM256.68 178.25h1.64v1.75h-1.64zM260.43 179.25h1.64v1.75h-1.64zM264.18 179.25h1.64v1.75h-1.64zM267.93 179.75h1.64v1.75h-1.64zM271.68 180.25h1.64v1.75h-1.64zM275.57 180.25h1.64v1.75h-1.64zM279.46 180.25h1.64v1.75h-1.64zM283.35 180.25h1.64v1.75h-1.64zM287.24 180.25h1.64v1.75h-1.64zM291.12 180.25h1.64v1.75h-1.64zM295.01 180.25h1.64v1.75h-1.64zM298.90 180.25h1.64v1.75h-1.64zM302.79 180.25h1.64v1.75h-1.64zM306.68 180.25h1.64v1.75h-1.64zM311.68 179.25h1.64v1.75h-1.64zM315.63 179.25h1.64v1.75h-1.64zM319.59 179.25h1.64v1.75h-1.64zM323.54 179.25h1.64v1.75h-1.64zM327.50 179.25h1.64v1.75h-1.64zM331.45 179.25h1.64v1.75h-1.64zM335.41 179.25h1.64v1.75h-1.64zM339.36 179.25h1.64v1.75h-1.64zM343.32 179.25h1.64v1.75h-1.64zM347.27 179.25h1.64v1.75h-1.64zM351.23 179.25h1.64v1.75h-1.64zM355.18 179.25h1.64v1.75h-1.64zM359.68 176.25h1.64v1.75h-1.64zM363.18 170.25h1.64v1.75h-1.64zM367.18 166.25h1.64v1.75h-1.64zM371.43 165.25h1.64v1.75h-1.64zM375.18 164.25h1.64v1.75h-1.64zM379.43 163.25h1.64v1.75h-1.64zM383.43 161.25h1.64v1.75h-1.64zM387.18 160.25h1.64v1.75h-1.64zM390.68 160.25h1.64v1.75h-1.64zM393.93 158.25h1.64v1.75h-1.64zM397.68 157.25h1.64v1.75h-1.64zM401.93 157.25h1.64v1.75h-1.64zM405.68 158.25h1.64v1.75h-1.64zM408.93 161.25h1.64v1.75h-1.64zM412.68 166.25h1.64v1.75h-1.64zM416.43 171.25h1.64v1.75h-1.64zM420.68 174.25h1.64v1.75h-1.64zM424.68 176.25h1.64v1.75h-1.64zM428.93 177.25h1.64v1.75h-1.64zM432.68 178.25h1.64v1.75h-1.64zM437.68 179.25h1.64v1.75h-1.64zM442.68 179.25h1.64v1.75h-1.64zM446.18 179.25h1.64v1.75h-1.64zM449.68 179.25h1.64v1.75h-1.64zM453.18 179.25h1.64v1.75h-1.64zM456.68 179.25h1.64v1.75h-1.64zM460.18 179.25h1.64v1.75h-1.64zM465.18 178.25h1.64v1.75h-1.64zM469.18 178.25h1.64v1.75h-1.64zM473.18 178.25h1.64v1.75h-1.64zM477.18 178.25h1.64v1.75h-1.64zM481.18 178.25h1.64v1.75h-1.64zM485.18 178.25h1.64v1.75h-1.64zM488.93 180.25h1.64v1.75h-1.64zM492.68 180.25h1.64v1.75h-1.64zM496.43 180.25h1.64v1.75h-1.64zM500.18 180.25h1.64v1.75h-1.64zM503.93 180.25h1.64v1.75h-1.64zM507.68 180.25h1.64v1.75h-1.64zM511.43 180.25h1.64v1.75h-1.64zM515.18 180.25h1.64v1.75h-1.64zM521.43 180.25h1.64v1.75h-1.64zM525.80 180.25h1.64v1.75h-1.64zM530.18 180.25h1.64v1.75h-1.64zM533.93 179.25h1.64v1.75h-1.64zM537.68 180.25h1.64v1.75h-1.64zM541.43 180.25h1.64v1.75h-1.64zM545.18 180.25h1.64v1.75h-1.64zM548.93 180.25h1.64v1.75h-1.64zM552.68 180.25h1.64v1.75h-1.64zM556.58 180.25h1.64v1.75h-1.64zM560.48 180.25h1.64v1.75h-1.64zM564.38 180.25h1.64v1.75h-1.64zM568.28 180.25h1.64v1.75h-1.64zM572.18 180.25h1.64v1.75h-1.64zM576.08 180.25h1.64v1.75h-1.64zM579.98 180.25h1.64v1.75h-1.64zM583.88 180.25h1.64v1.75h-1.64zM587.78 180.25h1.64v1.75h-1.64zM591.68 180.25h1.64v1.75h-1.64zM595.58 180.25h1.64v1.75h-1.64zM599.48 180.25h1.64v1.75h-1.64zM603.38 180.25h1.64v1.75h-1.64zM607.28 180.25h1.64v1.75h-1.64zM611.18 180.25h1.64v1.75h-1.64zM614.62 180.25h1.64v1.75h-1.64zM618.05 180.25h1.64v1.75h-1.64zM621.49 180.25h1.64v1.75h-1.64zM624.93 180.25h1.64v1.75h-1.64zM629.18 179.25h1.64v1.75h-1.64zM633.68 176.25h1.64v1.75h-1.64zM637.43 173.25h1.64v1.75h-1.64zM641.18 171.25h1.64v1.75h-1.64zM645.43 170.25h1.64v1.75h-1.64zM649.43 168.25h1.64v1.75h-1.64zM653.18 166.25h1.64v1.75h-1.64zM656.18 163.25h1.64v1.75h-1.64zM659.18 158.25h1.64v1.75h-1.64zM662.93 153.25h1.64v1.75h-1.64zM666.68 150.25h1.64v1.75h-1.64zM671.18 146.25h1.64v1.75h-1.64zM674.93 144.25h1.64v1.75h-1.64zM678.68 142.25h1.64v1.75h-1.64zM682.93 141.25h1.64v1.75h-1.64zM686.93 140.25h1.64v1.75h-1.64zM691.18 138.25h1.64v1.75h-1.64zM695.68 144.25h1.64v1.75h-1.64zM698.68 154.25h1.64v1.75h-1.64zM701.93 156.25h1.64v1.75h-1.64zM705.68 156.25h1.64v1.75h-1.64zM710.18 157.25h1.64v1.75h-1.64zM714.18 163.25h1.64v1.75h-1.64zM718.18 168.25h1.64v1.75h-1.64zM722.43 173.25h1.64v1.75h-1.64zM726.18 176.25h1.64v1.75h-1.64zM730.68 177.25h1.64v1.75h-1.64zM734.93 178.25h1.64v1.75h-1.64zM739.18 179.25h1.64v1.75h-1.64zM743.68 179.25h1.64v1.75h-1.64zM747.68 179.25h1.64v1.75h-1.64zM751.68 179.25h1.64v1.75h-1.64zM755.68 179.25h1.64v1.75h-1.64zM759.68 179.25h1.64v1.75h-1.64zM763.68 179.25h1.64v1.75h-1.64zM767.68 179.25h1.64v1.75h-1.64zM771.68 179.25h1.64v1.75h-1.64zM775.68 179.25h1.64v1.75h-1.64zM779.68 179.25h1.64v1.75h-1.64zM783.68 179.25h1.64v1.75h-1.64zM787.43 179.25h1.64v1.75h-1.64zM790.87 179.25h1.64v1.75h-1.64zM794.30 179.25h1.64v1.75h-1.64zM797.74 179.25h1.64v1.75h-1.64zM801.18 179.25h1.64v1.75h-1.64zM804.93 179.25h1.64v1.75h-1.64zM808.68 179.25h1.64v1.75h-1.64zM814.28 179.25h1.64v1.75h-1.64zM817.39 179.25h1.64v1.75h-1.64zM821.53 178.25h1.64v1.75h-1.64zM825.05 176.25h1.64v1.75h-1.64zM828.78 173.25h1.64v1.75h-1.64zM832.09 169.25h1.64v1.75h-1.64zM836.02 167.25h1.64v1.75h-1.64zM840.17 165.25h1.64v1.75h-1.64zM844.31 165.25h1.64v1.75h-1.64zM848.03 165.25h1.64v1.75h-1.64zM851.14 164.25h1.64v1.75h-1.64zM855.69 158.25h1.64v1.75h-1.64zM859.42 153.25h1.64v1.75h-1.64zM862.94 147.25h1.64v1.75h-1.64zM866.67 144.25h1.64v1.75h-1.64zM870.60 142.25h1.64v1.75h-1.64zM874.33 140.25h1.64v1.75h-1.64zM878.47 139.25h1.64v1.75h-1.64zM882.19 136.25h1.64v1.75h-1.64zM885.71 134.25h1.64v1.75h-1.64zM889.85 132.25h1.64v1.75h-1.64zM894.00 129.25h1.64v1.75h-1.64zM897.72 127.25h1.64v1.75h-1.64zM901.66 132.25h1.64v1.75h-1.64zM905.38 148.25h1.64v1.75h-1.64zM908.49 152.25h1.64v1.75h-1.64zM911.80 153.25h1.64v1.75h-1.64zM916.77 154.25h1.64v1.75h-1.64zM920.29 158.25h1.64v1.75h-1.64zM924.64 167.25h1.64v1.75h-1.64zM928.78 172.25h1.64v1.75h-1.64zM932.51 175.25h1.64v1.75h-1.64zM936.44 177.25h1.64v1.75h-1.64zM940.17 178.25h1.64v1.75h-1.64zM943.69 179.25h1.64v1.75h-1.64zM947.42 179.25h1.64v1.75h-1.64zM951.14 179.25h1.64v1.75h-1.64zM954.87 179.25h1.64v1.75h-1.64zM958.59 179.25h1.64v1.75h-1.64zM962.32 179.25h1.64v1.75h-1.64zM966.46 180.25h1.64v1.75h-1.64zM970.60 180.25h1.64v1.75h-1.64zM974.74 180.25h1.64v1.75h-1.64zM978.88 179.25h1.64v1.75h-1.64zM983.02 179.25h1.64v1.75h-1.64zM987.16 179.25h1.64v1.75h-1.64zM991.30 179.25h1.64v1.75h-1.64zM994.41 179.25h1.64v1.75h-1.64zM997.52 179.25h1.64v1.75h-1.64zM1001.45 179.25h1.64v1.75h-1.64z" fill="#00ff00"/>
<rect x="224.80" y="152.10" width="1.9" height="1.9" fill="#b01a0a"/>
</g>
<rect x="108.5" y="205.55" width="897.70" height="66.35" fill="#000"/>
<line x1="108.5" x2="1006.2" y1="212.4" y2="212.4" stroke="#848484" stroke-width="0.62" stroke-dasharray="1.75 1.45"/>
<line x1="105.3" x2="108.5" y1="212.4" y2="212.4" stroke="#151515" stroke-width="0.65"/>
<text x="103.9" y="214.50" text-anchor="end" fill="#303038">6000</text>
<line x1="108.5" x2="1006.2" y1="232.0" y2="232.0" stroke="#848484" stroke-width="0.62" stroke-dasharray="1.75 1.45"/>
<line x1="105.3" x2="108.5" y1="232.0" y2="232.0" stroke="#151515" stroke-width="0.65"/>
<text x="103.9" y="234.10" text-anchor="end" fill="#303038">4000</text>
<line x1="108.5" x2="1006.2" y1="252.4" y2="252.4" stroke="#848484" stroke-width="0.62" stroke-dasharray="1.75 1.45"/>
<line x1="105.3" x2="108.5" y1="252.4" y2="252.4" stroke="#151515" stroke-width="0.65"/>
<text x="103.9" y="254.50" text-anchor="end" fill="#303038">2000</text>
<line x1="105.3" x2="108.5" y1="271.6" y2="271.6" stroke="#151515" stroke-width="0.65"/>
<text x="103.9" y="273.70" text-anchor="end" fill="#303038">0</text>
<line x1="118.60" x2="118.60" y1="271.90" y2="275.10" stroke="#1c1c1c" stroke-width="0.75"/>
<text x="118.60" y="281.30" text-anchor="middle" fill="#303038">930.0</text>
<line x1="151.95" x2="151.95" y1="271.90" y2="273.80" stroke="#383838" stroke-width="0.6"/>
<line x1="185.30" x2="185.30" y1="271.90" y2="273.80" stroke="#383838" stroke-width="0.6"/>
<line x1="218.65" x2="218.65" y1="271.90" y2="273.80" stroke="#383838" stroke-width="0.6"/>
<line x1="252.00" x2="252.00" y1="271.90" y2="273.80" stroke="#383838" stroke-width="0.6"/>
<line x1="285.35" x2="285.35" y1="271.90" y2="275.10" stroke="#1c1c1c" stroke-width="0.75"/>
<text x="285.35" y="281.30" text-anchor="middle" fill="#303038">935.0</text>
<line x1="318.70" x2="318.70" y1="271.90" y2="273.80" stroke="#383838" stroke-width="0.6"/>
<line x1="352.05" x2="352.05" y1="271.90" y2="273.80" stroke="#383838" stroke-width="0.6"/>
<line x1="385.40" x2="385.40" y1="271.90" y2="273.80" stroke="#383838" stroke-width="0.6"/>
<line x1="418.75" x2="418.75" y1="271.90" y2="273.80" stroke="#383838" stroke-width="0.6"/>
<line x1="452.10" x2="452.10" y1="271.90" y2="275.10" stroke="#1c1c1c" stroke-width="0.75"/>
<text x="452.10" y="281.30" text-anchor="middle" fill="#303038">940.0</text>
<line x1="485.45" x2="485.45" y1="271.90" y2="273.80" stroke="#383838" stroke-width="0.6"/>
<line x1="518.80" x2="518.80" y1="271.90" y2="273.80" stroke="#383838" stroke-width="0.6"/>
<line x1="552.15" x2="552.15" y1="271.90" y2="273.80" stroke="#383838" stroke-width="0.6"/>
<line x1="585.50" x2="585.50" y1="271.90" y2="273.80" stroke="#383838" stroke-width="0.6"/>
<line x1="618.85" x2="618.85" y1="271.90" y2="275.10" stroke="#1c1c1c" stroke-width="0.75"/>
<text x="618.85" y="281.30" text-anchor="middle" fill="#303038">945.0</text>
<line x1="652.20" x2="652.20" y1="271.90" y2="273.80" stroke="#383838" stroke-width="0.6"/>
<line x1="685.55" x2="685.55" y1="271.90" y2="273.80" stroke="#383838" stroke-width="0.6"/>
<line x1="718.90" x2="718.90" y1="271.90" y2="273.80" stroke="#383838" stroke-width="0.6"/>
<line x1="752.25" x2="752.25" y1="271.90" y2="273.80" stroke="#383838" stroke-width="0.6"/>
<line x1="785.60" x2="785.60" y1="271.90" y2="275.10" stroke="#1c1c1c" stroke-width="0.75"/>
<text x="785.60" y="281.30" text-anchor="middle" fill="#303038">950.0</text>
<line x1="818.95" x2="818.95" y1="271.90" y2="273.80" stroke="#383838" stroke-width="0.6"/>
<line x1="852.30" x2="852.30" y1="271.90" y2="273.80" stroke="#383838" stroke-width="0.6"/>
<line x1="885.65" x2="885.65" y1="271.90" y2="273.80" stroke="#383838" stroke-width="0.6"/>
<line x1="919.00" x2="919.00" y1="271.90" y2="273.80" stroke="#383838" stroke-width="0.6"/>
<line x1="952.35" x2="952.35" y1="271.90" y2="275.10" stroke="#1c1c1c" stroke-width="0.75"/>
<text x="952.35" y="281.30" text-anchor="middle" fill="#303038">955.0</text>
<line x1="985.70" x2="985.70" y1="271.90" y2="273.80" stroke="#383838" stroke-width="0.6"/>
<text x="108.2" y="202.95" font-size="6.6" fill="#303038" textLength="52" lengthAdjust="spacingAndGlyphs">Engine Speed (RPM)</text>
<text x="1005.90" y="203.55" font-size="6.6" text-anchor="end" fill="#303038" textLength="119.2" lengthAdjust="spacingAndGlyphs">Engine Speed (RPM)=3999, Time=933.219s</text>
<clipPath id="cp2"><rect x="108.5" y="205.55" width="897.70" height="66.35"/></clipPath>
<g clip-path="url(#cp2)">
<polyline points="108.75,241.5 117.5,241.5 121.75,241.5 125.75,242.5 130.0,241.5 134.25,242.5 138.25,242.5 142.5,242.5 148.0,242.5 152.0,242.5 160.0,241.5 163.75,240.5 171.75,239.5 175.75,238.5 180.0,237.5 186.25,236.5 193.75,235.5 197.5,234.5 205.0,232.5 210.0,231.5 213.75,230.5 218.0,231.5 222.0,230.5 225.75,232.5 230.0,231.5 233.0,230.5 236.5,231.5 240.5,230.5 245.0,231.5 249.0,231.5 253.0,230.5 257.5,231.5 261.25,232.5 272.5,231.5 276.25,232.5 287.5,232.5 291.25,232.5 300.0,232.5 307.5,233.5 315.0,233.5 318.75,233.5 322.5,233.5 326.25,233.5 330.0,234.5 333.75,233.5 337.5,234.5 350.0,234.5 356.0,233.5 360.5,234.5 368.5,233.5 376.0,233.5 384.25,232.5 391.5,232.5 398.5,232.5 402.75,232.5 406.5,233.5 413.5,232.5 421.5,232.5 425.5,232.5 429.75,233.5 436.0,233.5 443.5,234.5 451.0,234.5 456.0,235.5 466.0,236.5 471.0,236.5 481.0,236.5 488.5,237.5 498.5,238.5 508.5,238.5 518.5,238.5 526.0,239.5 543.5,239.5 546.0,239.5 549.75,239.5 553.5,239.5 566.0,239.5 569.75,239.5 573.5,239.5 579.75,239.5 584.75,239.5 612.0,239.5 625.75,238.5 630.0,239.5 634.5,239.5 638.25,238.5 646.25,238.5 654.0,238.5 660.0,237.5 667.5,236.5 675.75,235.5 683.75,233.5 692.0,232.5 699.5,232.5 702.75,233.5 707.0,231.5 711.0,231.5 715.0,232.5 719.5,231.5 723.25,233.5 727.0,232.5 735.75,232.5 744.5,233.5 752.0,233.5 762.0,234.5 774.5,234.5 784.5,235.5 794.5,236.5 804.5,237.5 812.0,237.5 818.21,238.5 825.87,238.5 832.91,238.5 840.99,238.5 848.85,238.5 856.51,237.5 863.76,237.5 871.42,236.5 875.15,236.5 883.01,235.5 890.67,233.5 898.54,232.5 906.2,231.5 909.31,232.5 912.62,231.5 917.59,232.5 921.11,232.5 925.46,231.5 929.6,233.5 933.33,232.5 940.99,233.5 948.65,234.5 956.93,236.5 967.28,237.5 975.56,239.5 983.84,241.5 992.12,242.5 998.34,243.5 1006.2,245.5" fill="none" stroke="#00f000" stroke-width="0.56" stroke-linejoin="round"/>
<path d="M112.31 240.25h1.64v1.75h-1.64zM116.68 240.25h1.64v1.75h-1.64zM120.93 240.25h1.64v1.75h-1.64zM124.93 241.25h1.64v1.75h-1.64zM129.18 240.25h1.64v1.75h-1.64zM133.43 241.25h1.64v1.75h-1.64zM137.43 241.25h1.64v1.75h-1.64zM141.68 241.25h1.64v1.75h-1.64zM147.18 241.25h1.64v1.75h-1.64zM151.18 241.25h1.64v1.75h-1.64zM155.18 240.75h1.64v1.75h-1.64zM159.18 240.25h1.64v1.75h-1.64zM162.93 239.25h1.64v1.75h-1.64zM166.93 238.75h1.64v1.75h-1.64zM170.93 238.25h1.64v1.75h-1.64zM174.93 237.25h1.64v1.75h-1.64zM179.18 236.25h1.64v1.75h-1.64zM182.31 235.75h1.64v1.75h-1.64zM185.43 235.25h1.64v1.75h-1.64zM189.18 234.75h1.64v1.75h-1.64zM192.93 234.25h1.64v1.75h-1.64zM196.68 233.25h1.64v1.75h-1.64zM200.43 232.25h1.64v1.75h-1.64zM204.18 231.25h1.64v1.75h-1.64zM209.18 230.25h1.64v1.75h-1.64zM212.93 229.25h1.64v1.75h-1.64zM217.18 230.25h1.64v1.75h-1.64zM221.18 229.25h1.64v1.75h-1.64zM229.18 230.25h1.64v1.75h-1.64zM232.18 229.25h1.64v1.75h-1.64zM235.68 230.25h1.64v1.75h-1.64zM239.68 229.25h1.64v1.75h-1.64zM244.18 230.25h1.64v1.75h-1.64zM248.18 230.25h1.64v1.75h-1.64zM252.18 229.25h1.64v1.75h-1.64zM256.68 230.25h1.64v1.75h-1.64zM260.43 231.25h1.64v1.75h-1.64zM264.18 230.92h1.64v1.75h-1.64zM267.93 230.58h1.64v1.75h-1.64zM271.68 230.25h1.64v1.75h-1.64zM275.43 231.25h1.64v1.75h-1.64zM279.18 231.25h1.64v1.75h-1.64zM282.93 231.25h1.64v1.75h-1.64zM286.68 231.25h1.64v1.75h-1.64zM290.43 231.25h1.64v1.75h-1.64zM294.81 231.25h1.64v1.75h-1.64zM299.18 231.25h1.64v1.75h-1.64zM302.93 231.75h1.64v1.75h-1.64zM306.68 232.25h1.64v1.75h-1.64zM310.43 232.25h1.64v1.75h-1.64zM314.18 232.25h1.64v1.75h-1.64zM317.93 232.25h1.64v1.75h-1.64zM321.68 232.25h1.64v1.75h-1.64zM325.43 232.25h1.64v1.75h-1.64zM329.18 233.25h1.64v1.75h-1.64zM332.93 232.25h1.64v1.75h-1.64zM336.68 233.25h1.64v1.75h-1.64zM340.85 233.25h1.64v1.75h-1.64zM345.01 233.25h1.64v1.75h-1.64zM349.18 233.25h1.64v1.75h-1.64zM352.18 232.75h1.64v1.75h-1.64zM355.18 232.25h1.64v1.75h-1.64zM359.68 233.25h1.64v1.75h-1.64zM363.68 232.75h1.64v1.75h-1.64zM367.68 232.25h1.64v1.75h-1.64zM371.43 232.25h1.64v1.75h-1.64zM375.18 232.25h1.64v1.75h-1.64zM379.31 231.75h1.64v1.75h-1.64zM383.43 231.25h1.64v1.75h-1.64zM387.06 231.25h1.64v1.75h-1.64zM390.68 231.25h1.64v1.75h-1.64zM394.18 231.25h1.64v1.75h-1.64zM397.68 231.25h1.64v1.75h-1.64zM401.93 231.25h1.64v1.75h-1.64zM405.68 232.25h1.64v1.75h-1.64zM409.18 231.75h1.64v1.75h-1.64zM412.68 231.25h1.64v1.75h-1.64zM416.68 231.25h1.64v1.75h-1.64zM420.68 231.25h1.64v1.75h-1.64zM424.68 231.25h1.64v1.75h-1.64zM428.93 232.25h1.64v1.75h-1.64zM432.06 232.25h1.64v1.75h-1.64zM435.18 232.25h1.64v1.75h-1.64zM438.93 232.75h1.64v1.75h-1.64zM442.68 233.25h1.64v1.75h-1.64zM446.43 233.25h1.64v1.75h-1.64zM450.18 233.25h1.64v1.75h-1.64zM455.18 234.25h1.64v1.75h-1.64zM458.51 234.58h1.64v1.75h-1.64zM461.85 234.92h1.64v1.75h-1.64zM465.18 235.25h1.64v1.75h-1.64zM470.18 235.25h1.64v1.75h-1.64zM473.51 235.25h1.64v1.75h-1.64zM476.85 235.25h1.64v1.75h-1.64zM480.18 235.25h1.64v1.75h-1.64zM483.93 235.75h1.64v1.75h-1.64zM487.68 236.25h1.64v1.75h-1.64zM491.01 236.58h1.64v1.75h-1.64zM494.35 236.92h1.64v1.75h-1.64zM497.68 237.25h1.64v1.75h-1.64zM501.01 237.25h1.64v1.75h-1.64zM504.35 237.25h1.64v1.75h-1.64zM507.68 237.25h1.64v1.75h-1.64zM511.01 237.25h1.64v1.75h-1.64zM514.35 237.25h1.64v1.75h-1.64zM517.68 237.25h1.64v1.75h-1.64zM521.43 237.75h1.64v1.75h-1.64zM525.18 238.25h1.64v1.75h-1.64zM528.68 238.25h1.64v1.75h-1.64zM532.18 238.25h1.64v1.75h-1.64zM535.68 238.25h1.64v1.75h-1.64zM539.18 238.25h1.64v1.75h-1.64zM542.68 238.25h1.64v1.75h-1.64zM548.93 238.25h1.64v1.75h-1.64zM552.68 238.25h1.64v1.75h-1.64zM556.85 238.25h1.64v1.75h-1.64zM561.01 238.25h1.64v1.75h-1.64zM565.18 238.25h1.64v1.75h-1.64zM568.93 238.25h1.64v1.75h-1.64zM572.68 238.25h1.64v1.75h-1.64zM575.80 238.25h1.64v1.75h-1.64zM578.93 238.25h1.64v1.75h-1.64zM583.93 238.25h1.64v1.75h-1.64zM587.82 238.25h1.64v1.75h-1.64zM591.72 238.25h1.64v1.75h-1.64zM595.61 238.25h1.64v1.75h-1.64zM599.50 238.25h1.64v1.75h-1.64zM603.39 238.25h1.64v1.75h-1.64zM607.29 238.25h1.64v1.75h-1.64zM611.18 238.25h1.64v1.75h-1.64zM614.62 238.00h1.64v1.75h-1.64zM618.05 237.75h1.64v1.75h-1.64zM621.49 237.50h1.64v1.75h-1.64zM624.93 237.25h1.64v1.75h-1.64zM629.18 238.25h1.64v1.75h-1.64zM633.68 238.25h1.64v1.75h-1.64zM637.43 237.25h1.64v1.75h-1.64zM641.43 237.25h1.64v1.75h-1.64zM645.43 237.25h1.64v1.75h-1.64zM649.30 237.25h1.64v1.75h-1.64zM653.18 237.25h1.64v1.75h-1.64zM656.18 236.75h1.64v1.75h-1.64zM659.18 236.25h1.64v1.75h-1.64zM662.93 235.75h1.64v1.75h-1.64zM666.68 235.25h1.64v1.75h-1.64zM670.80 234.75h1.64v1.75h-1.64zM674.93 234.25h1.64v1.75h-1.64zM678.93 233.25h1.64v1.75h-1.64zM682.93 232.25h1.64v1.75h-1.64zM687.05 231.75h1.64v1.75h-1.64zM691.18 231.25h1.64v1.75h-1.64zM694.93 231.25h1.64v1.75h-1.64zM698.68 231.25h1.64v1.75h-1.64zM701.93 232.25h1.64v1.75h-1.64zM706.18 230.25h1.64v1.75h-1.64zM710.18 230.25h1.64v1.75h-1.64zM714.18 231.25h1.64v1.75h-1.64zM718.68 230.25h1.64v1.75h-1.64zM722.43 232.25h1.64v1.75h-1.64zM726.18 231.25h1.64v1.75h-1.64zM730.55 231.25h1.64v1.75h-1.64zM734.93 231.25h1.64v1.75h-1.64zM739.30 231.75h1.64v1.75h-1.64zM743.68 232.25h1.64v1.75h-1.64zM747.43 232.25h1.64v1.75h-1.64zM751.18 232.25h1.64v1.75h-1.64zM754.51 232.58h1.64v1.75h-1.64zM757.85 232.92h1.64v1.75h-1.64zM761.18 233.25h1.64v1.75h-1.64zM765.35 233.25h1.64v1.75h-1.64zM769.51 233.25h1.64v1.75h-1.64zM773.68 233.25h1.64v1.75h-1.64zM777.01 233.58h1.64v1.75h-1.64zM780.35 233.92h1.64v1.75h-1.64zM783.68 234.25h1.64v1.75h-1.64zM787.01 234.58h1.64v1.75h-1.64zM790.35 234.92h1.64v1.75h-1.64zM793.68 235.25h1.64v1.75h-1.64zM797.01 235.58h1.64v1.75h-1.64zM800.35 235.92h1.64v1.75h-1.64zM803.68 236.25h1.64v1.75h-1.64zM807.43 236.25h1.64v1.75h-1.64zM811.18 236.25h1.64v1.75h-1.64zM814.28 236.75h1.64v1.75h-1.64zM817.39 237.25h1.64v1.75h-1.64zM821.22 237.25h1.64v1.75h-1.64zM825.05 237.25h1.64v1.75h-1.64zM828.57 237.25h1.64v1.75h-1.64zM832.09 237.25h1.64v1.75h-1.64zM836.13 237.25h1.64v1.75h-1.64zM840.17 237.25h1.64v1.75h-1.64zM844.10 237.25h1.64v1.75h-1.64zM848.03 237.25h1.64v1.75h-1.64zM851.86 236.75h1.64v1.75h-1.64zM855.69 236.25h1.64v1.75h-1.64zM859.31 236.25h1.64v1.75h-1.64zM862.94 236.25h1.64v1.75h-1.64zM866.77 235.75h1.64v1.75h-1.64zM870.60 235.25h1.64v1.75h-1.64zM874.33 235.25h1.64v1.75h-1.64zM878.26 234.75h1.64v1.75h-1.64zM882.19 234.25h1.64v1.75h-1.64zM886.02 233.25h1.64v1.75h-1.64zM889.85 232.25h1.64v1.75h-1.64zM893.78 231.75h1.64v1.75h-1.64zM897.72 231.25h1.64v1.75h-1.64zM901.55 230.75h1.64v1.75h-1.64zM905.38 230.25h1.64v1.75h-1.64zM908.49 231.25h1.64v1.75h-1.64zM911.80 230.25h1.64v1.75h-1.64zM916.77 231.25h1.64v1.75h-1.64zM920.29 231.25h1.64v1.75h-1.64zM924.64 230.25h1.64v1.75h-1.64zM928.78 232.25h1.64v1.75h-1.64zM932.51 231.25h1.64v1.75h-1.64zM936.34 231.75h1.64v1.75h-1.64zM940.17 232.25h1.64v1.75h-1.64zM944.00 232.75h1.64v1.75h-1.64zM947.83 233.25h1.64v1.75h-1.64zM951.97 234.25h1.64v1.75h-1.64zM956.11 235.25h1.64v1.75h-1.64zM959.56 235.58h1.64v1.75h-1.64zM963.01 235.92h1.64v1.75h-1.64zM966.46 236.25h1.64v1.75h-1.64zM970.60 237.25h1.64v1.75h-1.64zM974.74 238.25h1.64v1.75h-1.64zM978.88 239.25h1.64v1.75h-1.64zM983.02 240.25h1.64v1.75h-1.64zM987.16 240.75h1.64v1.75h-1.64zM991.30 241.25h1.64v1.75h-1.64zM994.41 241.75h1.64v1.75h-1.64zM997.52 242.25h1.64v1.75h-1.64zM1001.45 243.25h1.64v1.75h-1.64z" fill="#00ff00"/>
<rect x="224.80" y="231.10" width="1.9" height="1.9" fill="#b01a0a"/>
</g>
<rect x="108.5" y="290.55" width="897.70" height="66.35" fill="#000"/>
<line x1="108.5" x2="1006.2" y1="301.4" y2="301.4" stroke="#848484" stroke-width="0.62" stroke-dasharray="1.75 1.45"/>
<line x1="105.3" x2="108.5" y1="301.4" y2="301.4" stroke="#151515" stroke-width="0.65"/>
<text x="103.9" y="303.50" text-anchor="end" fill="#303038">1</text>
<line x1="108.5" x2="1006.2" y1="329.45" y2="329.45" stroke="#848484" stroke-width="0.62" stroke-dasharray="1.75 1.45"/>
<line x1="105.3" x2="108.5" y1="329.45" y2="329.45" stroke="#151515" stroke-width="0.65"/>
<line x1="105.3" x2="108.5" y1="356.7" y2="356.7" stroke="#151515" stroke-width="0.65"/>
<text x="103.9" y="358.80" text-anchor="end" fill="#303038">0</text>
<line x1="118.60" x2="118.60" y1="356.90" y2="360.10" stroke="#1c1c1c" stroke-width="0.75"/>
<text x="118.60" y="366.30" text-anchor="middle" fill="#303038">930.0</text>
<line x1="151.95" x2="151.95" y1="356.90" y2="358.80" stroke="#383838" stroke-width="0.6"/>
<line x1="185.30" x2="185.30" y1="356.90" y2="358.80" stroke="#383838" stroke-width="0.6"/>
<line x1="218.65" x2="218.65" y1="356.90" y2="358.80" stroke="#383838" stroke-width="0.6"/>
<line x1="252.00" x2="252.00" y1="356.90" y2="358.80" stroke="#383838" stroke-width="0.6"/>
<line x1="285.35" x2="285.35" y1="356.90" y2="360.10" stroke="#1c1c1c" stroke-width="0.75"/>
<text x="285.35" y="366.30" text-anchor="middle" fill="#303038">935.0</text>
<line x1="318.70" x2="318.70" y1="356.90" y2="358.80" stroke="#383838" stroke-width="0.6"/>
<line x1="352.05" x2="352.05" y1="356.90" y2="358.80" stroke="#383838" stroke-width="0.6"/>
<line x1="385.40" x2="385.40" y1="356.90" y2="358.80" stroke="#383838" stroke-width="0.6"/>
<line x1="418.75" x2="418.75" y1="356.90" y2="358.80" stroke="#383838" stroke-width="0.6"/>
<line x1="452.10" x2="452.10" y1="356.90" y2="360.10" stroke="#1c1c1c" stroke-width="0.75"/>
<text x="452.10" y="366.30" text-anchor="middle" fill="#303038">940.0</text>
<line x1="485.45" x2="485.45" y1="356.90" y2="358.80" stroke="#383838" stroke-width="0.6"/>
<line x1="518.80" x2="518.80" y1="356.90" y2="358.80" stroke="#383838" stroke-width="0.6"/>
<line x1="552.15" x2="552.15" y1="356.90" y2="358.80" stroke="#383838" stroke-width="0.6"/>
<line x1="585.50" x2="585.50" y1="356.90" y2="358.80" stroke="#383838" stroke-width="0.6"/>
<line x1="618.85" x2="618.85" y1="356.90" y2="360.10" stroke="#1c1c1c" stroke-width="0.75"/>
<text x="618.85" y="366.30" text-anchor="middle" fill="#303038">945.0</text>
<line x1="652.20" x2="652.20" y1="356.90" y2="358.80" stroke="#383838" stroke-width="0.6"/>
<line x1="685.55" x2="685.55" y1="356.90" y2="358.80" stroke="#383838" stroke-width="0.6"/>
<line x1="718.90" x2="718.90" y1="356.90" y2="358.80" stroke="#383838" stroke-width="0.6"/>
<line x1="752.25" x2="752.25" y1="356.90" y2="358.80" stroke="#383838" stroke-width="0.6"/>
<line x1="785.60" x2="785.60" y1="356.90" y2="360.10" stroke="#1c1c1c" stroke-width="0.75"/>
<text x="785.60" y="366.30" text-anchor="middle" fill="#303038">950.0</text>
<line x1="818.95" x2="818.95" y1="356.90" y2="358.80" stroke="#383838" stroke-width="0.6"/>
<line x1="852.30" x2="852.30" y1="356.90" y2="358.80" stroke="#383838" stroke-width="0.6"/>
<line x1="885.65" x2="885.65" y1="356.90" y2="358.80" stroke="#383838" stroke-width="0.6"/>
<line x1="919.00" x2="919.00" y1="356.90" y2="358.80" stroke="#383838" stroke-width="0.6"/>
<line x1="952.35" x2="952.35" y1="356.90" y2="360.10" stroke="#1c1c1c" stroke-width="0.75"/>
<text x="952.35" y="366.30" text-anchor="middle" fill="#303038">955.0</text>
<line x1="985.70" x2="985.70" y1="356.90" y2="358.80" stroke="#383838" stroke-width="0.6"/>
<text x="108.2" y="287.95" font-size="6.6" fill="#303038" textLength="52.5" lengthAdjust="spacingAndGlyphs">Injection Volume (ml)</text>
<text x="1005.90" y="288.55" font-size="6.6" text-anchor="end" fill="#303038" textLength="125" lengthAdjust="spacingAndGlyphs">Injection Volume (ml)=0.605, Time=933.219s</text>
<clipPath id="cp3"><rect x="108.5" y="290.55" width="897.70" height="66.35"/></clipPath>
<g clip-path="url(#cp3)">
<polyline points="108.75,353.5 113.75,352.5 117.5,351.5 121.75,351.5 125.75,350.5 130.0,351.5 134.25,352.5 138.25,352.5 141.25,352.5 144.25,350.5 148.0,347.5 152.0,341.5 155.5,335.5 160.0,330.5 163.75,327.5 167.5,325.5 171.75,321.5 175.75,317.5 180.0,312.5 184.0,308.5 186.25,305.5 190.0,302.5 193.75,299.5 197.5,296.5 201.5,292.5 205.75,291.5 210.0,293.5 213.75,302.5 218.0,315.5 222.0,322.5 225.75,323.5 229.0,322.5 233.0,324.5 236.5,330.5 240.5,337.5 245.0,346.5 249.0,352.5 253.0,357.5 350.0,357.5 356.0,354.5 360.5,351.5 364.0,349.5 368.0,345.5 372.25,340.5 376.0,337.5 380.25,334.5 384.25,332.5 388.0,331.5 391.5,330.5 394.75,329.5 398.5,329.5 402.75,331.5 406.5,332.5 409.75,333.5 413.5,337.5 417.25,345.5 421.5,352.5 425.5,357.5 612.0,357.5 621.5,357.5 625.75,355.5 630.0,353.5 634.5,351.5 638.25,350.5 642.0,349.5 646.25,347.5 650.25,345.5 654.0,342.5 657.0,338.5 660.0,335.5 663.75,332.5 667.5,329.5 672.0,324.5 675.75,319.5 679.5,315.5 683.75,312.5 687.75,310.5 692.0,307.5 696.5,307.5 699.5,315.5 702.75,322.5 706.5,329.5 711.0,331.5 715.0,335.5 719.0,340.5 723.25,345.5 727.0,349.5 731.5,352.5 735.75,356.5 738.25,357.5 809.5,357.5 812.0,356.5 815.11,354.5 818.21,353.5 822.35,352.5 825.87,352.5 829.6,351.5 832.91,348.5 836.84,345.5 840.99,340.5 845.13,339.5 848.85,338.5 851.96,338.5 856.51,337.5 860.24,333.5 863.76,326.5 867.49,321.5 871.42,317.5 875.15,313.5 879.29,309.5 883.01,306.5 886.53,303.5 890.67,299.5 894.82,297.5 898.54,294.5 902.48,293.5 906.2,299.5 909.31,311.5 912.62,320.5 917.59,324.5 921.11,329.5 925.46,339.5 929.6,345.5 933.33,348.5 937.26,352.5 940.99,355.5 944.51,357.5 1006.2,357.5" fill="none" stroke="#00f000" stroke-width="0.56" stroke-linejoin="round"/>
<path d="M112.93 351.25h1.64v1.75h-1.64zM116.68 350.25h1.64v1.75h-1.64zM120.93 350.25h1.64v1.75h-1.64zM124.93 349.25h1.64v1.75h-1.64zM129.18 350.25h1.64v1.75h-1.64zM133.43 351.25h1.64v1.75h-1.64zM137.43 351.25h1.64v1.75h-1.64zM140.43 351.25h1.64v1.75h-1.64zM143.43 349.25h1.64v1.75h-1.64zM147.18 346.25h1.64v1.75h-1.64zM151.18 340.25h1.64v1.75h-1.64zM154.68 334.25h1.64v1.75h-1.64zM159.18 329.25h1.64v1.75h-1.64zM162.93 326.25h1.64v1.75h-1.64zM166.68 324.25h1.64v1.75h-1.64zM170.93 320.25h1.64v1.75h-1.64zM174.93 316.25h1.64v1.75h-1.64zM179.18 311.25h1.64v1.75h-1.64zM183.18 307.25h1.64v1.75h-1.64zM189.18 301.25h1.64v1.75h-1.64zM192.93 298.25h1.64v1.75h-1.64zM196.68 295.25h1.64v1.75h-1.64zM200.68 291.25h1.64v1.75h-1.64zM204.93 290.25h1.64v1.75h-1.64zM209.18 292.25h1.64v1.75h-1.64zM212.93 301.25h1.64v1.75h-1.64zM217.18 314.25h1.64v1.75h-1.64zM221.18 321.25h1.64v1.75h-1.64zM228.18 321.25h1.64v1.75h-1.64zM232.18 323.25h1.64v1.75h-1.64zM235.68 329.25h1.64v1.75h-1.64zM239.68 336.25h1.64v1.75h-1.64zM244.18 345.25h1.64v1.75h-1.64zM248.18 351.25h1.64v1.75h-1.64zM252.18 356.25h1.64v1.75h-1.64zM256.06 356.25h1.64v1.75h-1.64zM259.94 356.25h1.64v1.75h-1.64zM263.82 356.25h1.64v1.75h-1.64zM267.70 356.25h1.64v1.75h-1.64zM271.58 356.25h1.64v1.75h-1.64zM275.46 356.25h1.64v1.75h-1.64zM279.34 356.25h1.64v1.75h-1.64zM283.22 356.25h1.64v1.75h-1.64zM287.10 356.25h1.64v1.75h-1.64zM290.98 356.25h1.64v1.75h-1.64zM294.86 356.25h1.64v1.75h-1.64zM298.74 356.25h1.64v1.75h-1.64zM302.62 356.25h1.64v1.75h-1.64zM306.50 356.25h1.64v1.75h-1.64zM310.38 356.25h1.64v1.75h-1.64zM314.26 356.25h1.64v1.75h-1.64zM318.14 356.25h1.64v1.75h-1.64zM322.02 356.25h1.64v1.75h-1.64zM325.90 356.25h1.64v1.75h-1.64zM329.78 356.25h1.64v1.75h-1.64zM333.66 356.25h1.64v1.75h-1.64zM337.54 356.25h1.64v1.75h-1.64zM341.42 356.25h1.64v1.75h-1.64zM345.30 356.25h1.64v1.75h-1.64zM349.18 356.25h1.64v1.75h-1.64zM352.18 354.75h1.64v1.75h-1.64zM355.18 353.25h1.64v1.75h-1.64zM359.68 350.25h1.64v1.75h-1.64zM363.18 348.25h1.64v1.75h-1.64zM367.18 344.25h1.64v1.75h-1.64zM371.43 339.25h1.64v1.75h-1.64zM375.18 336.25h1.64v1.75h-1.64zM379.43 333.25h1.64v1.75h-1.64zM383.43 331.25h1.64v1.75h-1.64zM387.18 330.25h1.64v1.75h-1.64zM390.68 329.25h1.64v1.75h-1.64zM393.93 328.25h1.64v1.75h-1.64zM397.68 328.25h1.64v1.75h-1.64zM401.93 330.25h1.64v1.75h-1.64zM405.68 331.25h1.64v1.75h-1.64zM408.93 332.25h1.64v1.75h-1.64zM412.68 336.25h1.64v1.75h-1.64zM416.43 344.25h1.64v1.75h-1.64zM420.68 351.25h1.64v1.75h-1.64zM424.68 356.25h1.64v1.75h-1.64zM428.57 356.25h1.64v1.75h-1.64zM432.45 356.25h1.64v1.75h-1.64zM436.34 356.25h1.64v1.75h-1.64zM440.22 356.25h1.64v1.75h-1.64zM444.11 356.25h1.64v1.75h-1.64zM447.99 356.25h1.64v1.75h-1.64zM451.88 356.25h1.64v1.75h-1.64zM455.76 356.25h1.64v1.75h-1.64zM459.65 356.25h1.64v1.75h-1.64zM463.53 356.25h1.64v1.75h-1.64zM467.42 356.25h1.64v1.75h-1.64zM471.31 356.25h1.64v1.75h-1.64zM475.19 356.25h1.64v1.75h-1.64zM479.08 356.25h1.64v1.75h-1.64zM482.96 356.25h1.64v1.75h-1.64zM486.85 356.25h1.64v1.75h-1.64zM490.73 356.25h1.64v1.75h-1.64zM494.62 356.25h1.64v1.75h-1.64zM498.50 356.25h1.64v1.75h-1.64zM502.39 356.25h1.64v1.75h-1.64zM506.27 356.25h1.64v1.75h-1.64zM510.16 356.25h1.64v1.75h-1.64zM514.04 356.25h1.64v1.75h-1.64zM517.93 356.25h1.64v1.75h-1.64zM521.82 356.25h1.64v1.75h-1.64zM525.70 356.25h1.64v1.75h-1.64zM529.59 356.25h1.64v1.75h-1.64zM533.47 356.25h1.64v1.75h-1.64zM537.36 356.25h1.64v1.75h-1.64zM541.24 356.25h1.64v1.75h-1.64zM545.13 356.25h1.64v1.75h-1.64zM549.01 356.25h1.64v1.75h-1.64zM552.90 356.25h1.64v1.75h-1.64zM556.78 356.25h1.64v1.75h-1.64zM560.67 356.25h1.64v1.75h-1.64zM564.55 356.25h1.64v1.75h-1.64zM568.44 356.25h1.64v1.75h-1.64zM572.33 356.25h1.64v1.75h-1.64zM576.21 356.25h1.64v1.75h-1.64zM580.10 356.25h1.64v1.75h-1.64zM583.98 356.25h1.64v1.75h-1.64zM587.87 356.25h1.64v1.75h-1.64zM591.75 356.25h1.64v1.75h-1.64zM595.64 356.25h1.64v1.75h-1.64zM599.52 356.25h1.64v1.75h-1.64zM603.41 356.25h1.64v1.75h-1.64zM607.29 356.25h1.64v1.75h-1.64zM611.18 356.25h1.64v1.75h-1.64zM615.93 356.25h1.64v1.75h-1.64zM620.68 356.25h1.64v1.75h-1.64zM624.93 354.25h1.64v1.75h-1.64zM629.18 352.25h1.64v1.75h-1.64zM633.68 350.25h1.64v1.75h-1.64zM637.43 349.25h1.64v1.75h-1.64zM641.18 348.25h1.64v1.75h-1.64zM645.43 346.25h1.64v1.75h-1.64zM649.43 344.25h1.64v1.75h-1.64zM653.18 341.25h1.64v1.75h-1.64zM656.18 337.25h1.64v1.75h-1.64zM659.18 334.25h1.64v1.75h-1.64zM662.93 331.25h1.64v1.75h-1.64zM666.68 328.25h1.64v1.75h-1.64zM671.18 323.25h1.64v1.75h-1.64zM674.93 318.25h1.64v1.75h-1.64zM678.68 314.25h1.64v1.75h-1.64zM682.93 311.25h1.64v1.75h-1.64zM686.93 309.25h1.64v1.75h-1.64zM691.18 306.25h1.64v1.75h-1.64zM695.68 306.25h1.64v1.75h-1.64zM698.68 314.25h1.64v1.75h-1.64zM701.93 321.25h1.64v1.75h-1.64zM705.68 328.25h1.64v1.75h-1.64zM710.18 330.25h1.64v1.75h-1.64zM714.18 334.25h1.64v1.75h-1.64zM718.18 339.25h1.64v1.75h-1.64zM722.43 344.25h1.64v1.75h-1.64zM726.18 348.25h1.64v1.75h-1.64zM730.68 351.25h1.64v1.75h-1.64zM734.93 355.25h1.64v1.75h-1.64zM741.39 356.25h1.64v1.75h-1.64zM745.35 356.25h1.64v1.75h-1.64zM749.30 356.25h1.64v1.75h-1.64zM753.26 356.25h1.64v1.75h-1.64zM757.22 356.25h1.64v1.75h-1.64zM761.18 356.25h1.64v1.75h-1.64zM765.14 356.25h1.64v1.75h-1.64zM769.10 356.25h1.64v1.75h-1.64zM773.05 356.25h1.64v1.75h-1.64zM777.01 356.25h1.64v1.75h-1.64zM780.97 356.25h1.64v1.75h-1.64zM784.93 356.25h1.64v1.75h-1.64zM788.89 356.25h1.64v1.75h-1.64zM792.85 356.25h1.64v1.75h-1.64zM796.80 356.25h1.64v1.75h-1.64zM800.76 356.25h1.64v1.75h-1.64zM804.72 356.25h1.64v1.75h-1.64zM808.68 356.25h1.64v1.75h-1.64zM814.29 353.25h1.64v1.75h-1.64zM817.39 352.25h1.64v1.75h-1.64zM821.53 351.25h1.64v1.75h-1.64zM825.05 351.25h1.64v1.75h-1.64zM828.78 350.25h1.64v1.75h-1.64zM832.09 347.25h1.64v1.75h-1.64zM836.02 344.25h1.64v1.75h-1.64zM840.17 339.25h1.64v1.75h-1.64zM844.31 338.25h1.64v1.75h-1.64zM848.03 337.25h1.64v1.75h-1.64zM851.14 337.25h1.64v1.75h-1.64zM855.69 336.25h1.64v1.75h-1.64zM859.42 332.25h1.64v1.75h-1.64zM862.94 325.25h1.64v1.75h-1.64zM866.67 320.25h1.64v1.75h-1.64zM870.60 316.25h1.64v1.75h-1.64zM874.33 312.25h1.64v1.75h-1.64zM878.47 308.25h1.64v1.75h-1.64zM882.19 305.25h1.64v1.75h-1.64zM885.71 302.25h1.64v1.75h-1.64zM889.85 298.25h1.64v1.75h-1.64zM894.00 296.25h1.64v1.75h-1.64zM897.72 293.25h1.64v1.75h-1.64zM901.66 292.25h1.64v1.75h-1.64zM905.38 298.25h1.64v1.75h-1.64zM908.49 310.25h1.64v1.75h-1.64zM911.80 319.25h1.64v1.75h-1.64zM916.77 323.25h1.64v1.75h-1.64zM920.29 328.25h1.64v1.75h-1.64zM924.64 338.25h1.64v1.75h-1.64zM928.78 344.25h1.64v1.75h-1.64zM932.51 347.25h1.64v1.75h-1.64zM936.44 351.25h1.64v1.75h-1.64zM940.17 354.25h1.64v1.75h-1.64zM943.69 356.25h1.64v1.75h-1.64zM947.55 356.25h1.64v1.75h-1.64zM951.40 356.25h1.64v1.75h-1.64zM955.26 356.25h1.64v1.75h-1.64zM959.11 356.25h1.64v1.75h-1.64zM962.97 356.25h1.64v1.75h-1.64zM966.82 356.25h1.64v1.75h-1.64zM970.68 356.25h1.64v1.75h-1.64zM974.53 356.25h1.64v1.75h-1.64zM978.39 356.25h1.64v1.75h-1.64zM982.25 356.25h1.64v1.75h-1.64zM986.10 356.25h1.64v1.75h-1.64zM989.96 356.25h1.64v1.75h-1.64zM993.81 356.25h1.64v1.75h-1.64zM997.67 356.25h1.64v1.75h-1.64zM1001.52 356.25h1.64v1.75h-1.64z" fill="#00ff00"/>
<rect x="224.80" y="322.10" width="1.9" height="1.9" fill="#b01a0a"/>
</g>
<rect x="108.5" y="375.55" width="897.70" height="66.35" fill="#000"/>
<line x1="108.5" x2="1006.2" y1="378.55" y2="378.55" stroke="#848484" stroke-width="0.62" stroke-dasharray="1.75 1.45"/>
<line x1="105.3" x2="108.5" y1="378.55" y2="378.55" stroke="#151515" stroke-width="0.65"/>
<line x1="108.5" x2="1006.2" y1="400.45" y2="400.45" stroke="#848484" stroke-width="0.62" stroke-dasharray="1.75 1.45"/>
<line x1="105.3" x2="108.5" y1="400.45" y2="400.45" stroke="#151515" stroke-width="0.65"/>
<text x="103.9" y="402.55" text-anchor="end" fill="#303038">1</text>
<line x1="108.5" x2="1006.2" y1="422.4" y2="422.4" stroke="#848484" stroke-width="0.62" stroke-dasharray="1.75 1.45"/>
<line x1="105.3" x2="108.5" y1="422.4" y2="422.4" stroke="#151515" stroke-width="0.65"/>
<line x1="118.60" x2="118.60" y1="441.90" y2="445.10" stroke="#1c1c1c" stroke-width="0.75"/>
<text x="118.60" y="451.30" text-anchor="middle" fill="#303038">930.0</text>
<line x1="151.95" x2="151.95" y1="441.90" y2="443.80" stroke="#383838" stroke-width="0.6"/>
<line x1="185.30" x2="185.30" y1="441.90" y2="443.80" stroke="#383838" stroke-width="0.6"/>
<line x1="218.65" x2="218.65" y1="441.90" y2="443.80" stroke="#383838" stroke-width="0.6"/>
<line x1="252.00" x2="252.00" y1="441.90" y2="443.80" stroke="#383838" stroke-width="0.6"/>
<line x1="285.35" x2="285.35" y1="441.90" y2="445.10" stroke="#1c1c1c" stroke-width="0.75"/>
<text x="285.35" y="451.30" text-anchor="middle" fill="#303038">935.0</text>
<line x1="318.70" x2="318.70" y1="441.90" y2="443.80" stroke="#383838" stroke-width="0.6"/>
<line x1="352.05" x2="352.05" y1="441.90" y2="443.80" stroke="#383838" stroke-width="0.6"/>
<line x1="385.40" x2="385.40" y1="441.90" y2="443.80" stroke="#383838" stroke-width="0.6"/>
<line x1="418.75" x2="418.75" y1="441.90" y2="443.80" stroke="#383838" stroke-width="0.6"/>
<line x1="452.10" x2="452.10" y1="441.90" y2="445.10" stroke="#1c1c1c" stroke-width="0.75"/>
<text x="452.10" y="451.30" text-anchor="middle" fill="#303038">940.0</text>
<line x1="485.45" x2="485.45" y1="441.90" y2="443.80" stroke="#383838" stroke-width="0.6"/>
<line x1="518.80" x2="518.80" y1="441.90" y2="443.80" stroke="#383838" stroke-width="0.6"/>
<line x1="552.15" x2="552.15" y1="441.90" y2="443.80" stroke="#383838" stroke-width="0.6"/>
<line x1="585.50" x2="585.50" y1="441.90" y2="443.80" stroke="#383838" stroke-width="0.6"/>
<line x1="618.85" x2="618.85" y1="441.90" y2="445.10" stroke="#1c1c1c" stroke-width="0.75"/>
<text x="618.85" y="451.30" text-anchor="middle" fill="#303038">945.0</text>
<line x1="652.20" x2="652.20" y1="441.90" y2="443.80" stroke="#383838" stroke-width="0.6"/>
<line x1="685.55" x2="685.55" y1="441.90" y2="443.80" stroke="#383838" stroke-width="0.6"/>
<line x1="718.90" x2="718.90" y1="441.90" y2="443.80" stroke="#383838" stroke-width="0.6"/>
<line x1="752.25" x2="752.25" y1="441.90" y2="443.80" stroke="#383838" stroke-width="0.6"/>
<line x1="785.60" x2="785.60" y1="441.90" y2="445.10" stroke="#1c1c1c" stroke-width="0.75"/>
<text x="785.60" y="451.30" text-anchor="middle" fill="#303038">950.0</text>
<line x1="818.95" x2="818.95" y1="441.90" y2="443.80" stroke="#383838" stroke-width="0.6"/>
<line x1="852.30" x2="852.30" y1="441.90" y2="443.80" stroke="#383838" stroke-width="0.6"/>
<line x1="885.65" x2="885.65" y1="441.90" y2="443.80" stroke="#383838" stroke-width="0.6"/>
<line x1="919.00" x2="919.00" y1="441.90" y2="443.80" stroke="#383838" stroke-width="0.6"/>
<line x1="952.35" x2="952.35" y1="441.90" y2="445.10" stroke="#1c1c1c" stroke-width="0.75"/>
<text x="952.35" y="451.30" text-anchor="middle" fill="#303038">955.0</text>
<line x1="985.70" x2="985.70" y1="441.90" y2="443.80" stroke="#383838" stroke-width="0.6"/>
<text x="108.2" y="372.95" font-size="6.6" fill="#303038" textLength="98" lengthAdjust="spacingAndGlyphs">Manifold Absolute Pressure (Bar) (Bar)</text>
<text x="1005.90" y="373.55" font-size="6.6" text-anchor="end" fill="#303038" textLength="167" lengthAdjust="spacingAndGlyphs">Manifold Absolute Pressure (Bar) (Bar)=1.42, Time=933.219s</text>
<clipPath id="cp4"><rect x="108.5" y="375.55" width="897.70" height="66.35"/></clipPath>
<g clip-path="url(#cp4)">
<polyline points="108.75,429.5 113.75,429.5 117.5,425.5 121.75,428.5 125.75,429.5 130.0,431.5 134.25,432.5 138.25,431.5 141.25,428.5 144.25,424.5 148.0,410.5 152.0,405.5 155.5,404.5 160.0,403.5 163.75,401.5 167.5,400.5 171.75,399.5 175.75,396.5 180.0,392.5 184.0,389.5 186.25,388.5 190.0,386.5 193.75,384.5 197.5,382.5 201.5,382.5 205.75,382.5 210.0,382.5 213.75,386.5 218.0,385.5 222.0,385.5 225.75,382.5 229.0,383.5 233.0,387.5 236.5,395.5 240.5,414.5 245.0,424.5 249.0,429.5 253.0,432.5 257.5,434.5 261.25,434.5 265.0,435.5 272.5,436.5 280.0,436.5 295.0,436.5 300.0,435.5 307.5,435.5 312.5,435.5 325.0,435.5 330.0,434.5 350.0,434.5 356.0,432.5 357.25,430.5 360.5,421.5 364.0,409.5 368.0,402.5 372.25,402.5 376.0,399.5 380.25,397.5 384.25,395.5 388.0,393.5 391.5,390.5 395.25,386.5 398.5,388.5 402.75,389.5 406.5,390.5 409.75,396.5 413.5,415.5 417.25,422.5 421.5,428.5 425.5,432.5 429.75,432.5 433.5,434.5 438.5,434.5 473.5,434.5 478.5,434.5 486.0,434.5 489.75,434.5 496.0,434.5 501.0,434.5 506.0,434.5 511.0,434.5 516.0,434.5 522.25,434.5 526.0,434.5 531.0,434.5 541.0,433.5 546.0,434.5 556.0,433.5 563.5,434.5 586.0,434.5 593.0,433.5 598.5,434.5 603.5,433.5 612.0,434.5 625.75,434.5 630.0,432.5 634.5,429.5 638.25,426.5 642.0,423.5 646.25,422.5 650.25,419.5 654.0,416.5 657.0,412.5 660.0,410.5 663.75,407.5 667.5,406.5 672.0,403.5 675.75,401.5 679.5,399.5 683.75,396.5 687.75,396.5 692.0,393.5 696.5,390.5 699.5,389.5 702.75,388.5 706.5,390.5 711.5,391.5 715.0,409.5 719.0,423.5 723.25,427.5 727.0,429.5 731.5,432.5 735.75,434.5 740.0,434.5 787.0,434.5 792.0,434.5 797.0,434.5 804.5,434.5 810.75,434.5 812.0,434.5 815.11,433.5 818.21,433.5 822.35,432.5 825.87,429.5 829.6,427.5 832.91,420.5 836.84,418.5 840.99,415.5 845.13,414.5 848.85,415.5 851.96,413.5 856.51,409.5 860.24,406.5 863.76,402.5 867.49,401.5 871.42,398.5 875.15,396.5 879.29,395.5 883.01,391.5 886.53,390.5 890.67,388.5 894.82,386.5 898.54,384.5 902.48,385.5 906.2,385.5 909.31,384.5 912.62,384.5 917.59,389.5 921.11,401.5 925.46,417.5 929.6,424.5 933.33,429.5 937.26,431.5 940.99,433.5 944.51,434.5 952.79,434.5 956.93,434.5 967.28,434.5 971.42,434.5 979.7,433.5 983.84,434.5 987.98,433.5 992.12,433.5 998.34,434.5 1006.2,434.5" fill="none" stroke="#00f000" stroke-width="0.56" stroke-linejoin="round"/>
<path d="M112.93 428.25h1.64v1.75h-1.64zM116.68 424.25h1.64v1.75h-1.64zM120.93 427.25h1.64v1.75h-1.64zM124.93 428.25h1.64v1.75h-1.64zM129.18 430.25h1.64v1.75h-1.64zM133.43 431.25h1.64v1.75h-1.64zM137.43 430.25h1.64v1.75h-1.64zM140.43 427.25h1.64v1.75h-1.64zM143.43 423.25h1.64v1.75h-1.64zM147.18 409.25h1.64v1.75h-1.64zM151.18 404.25h1.64v1.75h-1.64zM154.68 403.25h1.64v1.75h-1.64zM159.18 402.25h1.64v1.75h-1.64zM162.93 400.25h1.64v1.75h-1.64zM166.68 399.25h1.64v1.75h-1.64zM170.93 398.25h1.64v1.75h-1.64zM174.93 395.25h1.64v1.75h-1.64zM179.18 391.25h1.64v1.75h-1.64zM183.18 388.25h1.64v1.75h-1.64zM189.18 385.25h1.64v1.75h-1.64zM192.93 383.25h1.64v1.75h-1.64zM196.68 381.25h1.64v1.75h-1.64zM200.68 381.25h1.64v1.75h-1.64zM204.93 381.25h1.64v1.75h-1.64zM209.18 381.25h1.64v1.75h-1.64zM212.93 385.25h1.64v1.75h-1.64zM217.18 384.25h1.64v1.75h-1.64zM221.18 384.25h1.64v1.75h-1.64zM228.18 382.25h1.64v1.75h-1.64zM232.18 386.25h1.64v1.75h-1.64zM235.68 394.25h1.64v1.75h-1.64zM239.68 413.25h1.64v1.75h-1.64zM244.18 423.25h1.64v1.75h-1.64zM248.18 428.25h1.64v1.75h-1.64zM252.18 431.25h1.64v1.75h-1.64zM256.68 433.25h1.64v1.75h-1.64zM260.43 433.25h1.64v1.75h-1.64zM264.18 434.25h1.64v1.75h-1.64zM267.93 434.75h1.64v1.75h-1.64zM271.68 435.25h1.64v1.75h-1.64zM275.43 435.25h1.64v1.75h-1.64zM279.18 435.25h1.64v1.75h-1.64zM282.93 435.25h1.64v1.75h-1.64zM286.68 435.25h1.64v1.75h-1.64zM290.43 435.25h1.64v1.75h-1.64zM294.18 435.25h1.64v1.75h-1.64zM299.18 434.25h1.64v1.75h-1.64zM302.93 434.25h1.64v1.75h-1.64zM306.68 434.25h1.64v1.75h-1.64zM311.68 434.25h1.64v1.75h-1.64zM315.85 434.25h1.64v1.75h-1.64zM320.01 434.25h1.64v1.75h-1.64zM324.18 434.25h1.64v1.75h-1.64zM329.18 433.25h1.64v1.75h-1.64zM333.18 433.25h1.64v1.75h-1.64zM337.18 433.25h1.64v1.75h-1.64zM341.18 433.25h1.64v1.75h-1.64zM345.18 433.25h1.64v1.75h-1.64zM349.18 433.25h1.64v1.75h-1.64zM352.18 432.25h1.64v1.75h-1.64zM355.18 431.25h1.64v1.75h-1.64zM359.68 420.25h1.64v1.75h-1.64zM363.18 408.25h1.64v1.75h-1.64zM367.18 401.25h1.64v1.75h-1.64zM371.43 401.25h1.64v1.75h-1.64zM375.18 398.25h1.64v1.75h-1.64zM379.43 396.25h1.64v1.75h-1.64zM383.43 394.25h1.64v1.75h-1.64zM387.18 392.25h1.64v1.75h-1.64zM390.68 389.25h1.64v1.75h-1.64zM394.43 385.25h1.64v1.75h-1.64zM397.68 387.25h1.64v1.75h-1.64zM401.93 388.25h1.64v1.75h-1.64zM405.68 389.25h1.64v1.75h-1.64zM408.93 395.25h1.64v1.75h-1.64zM412.68 414.25h1.64v1.75h-1.64zM416.43 421.25h1.64v1.75h-1.64zM420.68 427.25h1.64v1.75h-1.64zM424.68 431.25h1.64v1.75h-1.64zM428.93 431.25h1.64v1.75h-1.64zM432.68 433.25h1.64v1.75h-1.64zM437.68 433.25h1.64v1.75h-1.64zM441.57 433.25h1.64v1.75h-1.64zM445.46 433.25h1.64v1.75h-1.64zM449.35 433.25h1.64v1.75h-1.64zM453.24 433.25h1.64v1.75h-1.64zM457.12 433.25h1.64v1.75h-1.64zM461.01 433.25h1.64v1.75h-1.64zM464.90 433.25h1.64v1.75h-1.64zM468.79 433.25h1.64v1.75h-1.64zM472.68 433.25h1.64v1.75h-1.64zM477.68 433.25h1.64v1.75h-1.64zM481.43 433.25h1.64v1.75h-1.64zM485.18 433.25h1.64v1.75h-1.64zM488.93 433.25h1.64v1.75h-1.64zM492.06 433.25h1.64v1.75h-1.64zM495.18 433.25h1.64v1.75h-1.64zM500.18 433.25h1.64v1.75h-1.64zM505.18 433.25h1.64v1.75h-1.64zM510.18 433.25h1.64v1.75h-1.64zM515.18 433.25h1.64v1.75h-1.64zM518.30 433.25h1.64v1.75h-1.64zM521.43 433.25h1.64v1.75h-1.64zM525.18 433.25h1.64v1.75h-1.64zM530.18 433.25h1.64v1.75h-1.64zM533.51 432.92h1.64v1.75h-1.64zM536.85 432.58h1.64v1.75h-1.64zM540.18 432.25h1.64v1.75h-1.64zM545.18 433.25h1.64v1.75h-1.64zM548.51 432.92h1.64v1.75h-1.64zM551.85 432.58h1.64v1.75h-1.64zM555.18 432.25h1.64v1.75h-1.64zM558.93 432.75h1.64v1.75h-1.64zM562.68 433.25h1.64v1.75h-1.64zM566.43 433.25h1.64v1.75h-1.64zM570.18 433.25h1.64v1.75h-1.64zM573.93 433.25h1.64v1.75h-1.64zM577.68 433.25h1.64v1.75h-1.64zM581.43 433.25h1.64v1.75h-1.64zM585.18 433.25h1.64v1.75h-1.64zM588.68 432.75h1.64v1.75h-1.64zM592.18 432.25h1.64v1.75h-1.64zM597.68 433.25h1.64v1.75h-1.64zM602.68 432.25h1.64v1.75h-1.64zM606.93 432.75h1.64v1.75h-1.64zM611.18 433.25h1.64v1.75h-1.64zM614.62 433.25h1.64v1.75h-1.64zM618.05 433.25h1.64v1.75h-1.64zM621.49 433.25h1.64v1.75h-1.64zM624.93 433.25h1.64v1.75h-1.64zM629.18 431.25h1.64v1.75h-1.64zM633.68 428.25h1.64v1.75h-1.64zM637.43 425.25h1.64v1.75h-1.64zM641.18 422.25h1.64v1.75h-1.64zM645.43 421.25h1.64v1.75h-1.64zM649.43 418.25h1.64v1.75h-1.64zM653.18 415.25h1.64v1.75h-1.64zM656.18 411.25h1.64v1.75h-1.64zM659.18 409.25h1.64v1.75h-1.64zM662.93 406.25h1.64v1.75h-1.64zM666.68 405.25h1.64v1.75h-1.64zM671.18 402.25h1.64v1.75h-1.64zM674.93 400.25h1.64v1.75h-1.64zM678.68 398.25h1.64v1.75h-1.64zM682.93 395.25h1.64v1.75h-1.64zM686.93 395.25h1.64v1.75h-1.64zM691.18 392.25h1.64v1.75h-1.64zM695.68 389.25h1.64v1.75h-1.64zM698.68 388.25h1.64v1.75h-1.64zM701.93 387.25h1.64v1.75h-1.64zM705.68 389.25h1.64v1.75h-1.64zM710.68 390.25h1.64v1.75h-1.64zM714.18 408.25h1.64v1.75h-1.64zM718.18 422.25h1.64v1.75h-1.64zM722.43 426.25h1.64v1.75h-1.64zM726.18 428.25h1.64v1.75h-1.64zM730.68 431.25h1.64v1.75h-1.64zM734.93 433.25h1.64v1.75h-1.64zM739.18 433.25h1.64v1.75h-1.64zM743.10 433.25h1.64v1.75h-1.64zM747.01 433.25h1.64v1.75h-1.64zM750.93 433.25h1.64v1.75h-1.64zM754.85 433.25h1.64v1.75h-1.64zM758.76 433.25h1.64v1.75h-1.64zM762.68 433.25h1.64v1.75h-1.64zM766.60 433.25h1.64v1.75h-1.64zM770.51 433.25h1.64v1.75h-1.64zM774.43 433.25h1.64v1.75h-1.64zM778.35 433.25h1.64v1.75h-1.64zM782.26 433.25h1.64v1.75h-1.64zM786.18 433.25h1.64v1.75h-1.64zM791.18 433.25h1.64v1.75h-1.64zM796.18 433.25h1.64v1.75h-1.64zM799.93 433.25h1.64v1.75h-1.64zM803.68 433.25h1.64v1.75h-1.64zM806.80 433.25h1.64v1.75h-1.64zM809.93 433.25h1.64v1.75h-1.64zM814.29 432.25h1.64v1.75h-1.64zM817.39 432.25h1.64v1.75h-1.64zM821.53 431.25h1.64v1.75h-1.64zM825.05 428.25h1.64v1.75h-1.64zM828.78 426.25h1.64v1.75h-1.64zM832.09 419.25h1.64v1.75h-1.64zM836.02 417.25h1.64v1.75h-1.64zM840.17 414.25h1.64v1.75h-1.64zM844.31 413.25h1.64v1.75h-1.64zM848.03 414.25h1.64v1.75h-1.64zM851.14 412.25h1.64v1.75h-1.64zM855.69 408.25h1.64v1.75h-1.64zM859.42 405.25h1.64v1.75h-1.64zM862.94 401.25h1.64v1.75h-1.64zM866.67 400.25h1.64v1.75h-1.64zM870.60 397.25h1.64v1.75h-1.64zM874.33 395.25h1.64v1.75h-1.64zM878.47 394.25h1.64v1.75h-1.64zM882.19 390.25h1.64v1.75h-1.64zM885.71 389.25h1.64v1.75h-1.64zM889.85 387.25h1.64v1.75h-1.64zM894.00 385.25h1.64v1.75h-1.64zM897.72 383.25h1.64v1.75h-1.64zM901.66 384.25h1.64v1.75h-1.64zM905.38 384.25h1.64v1.75h-1.64zM908.49 383.25h1.64v1.75h-1.64zM911.80 383.25h1.64v1.75h-1.64zM916.77 388.25h1.64v1.75h-1.64zM920.29 400.25h1.64v1.75h-1.64zM924.64 416.25h1.64v1.75h-1.64zM928.78 423.25h1.64v1.75h-1.64zM932.51 428.25h1.64v1.75h-1.64zM936.44 430.25h1.64v1.75h-1.64zM940.17 432.25h1.64v1.75h-1.64zM943.69 433.25h1.64v1.75h-1.64zM947.83 433.25h1.64v1.75h-1.64zM951.97 433.25h1.64v1.75h-1.64zM956.11 433.25h1.64v1.75h-1.64zM959.56 433.25h1.64v1.75h-1.64zM963.01 433.25h1.64v1.75h-1.64zM966.46 433.25h1.64v1.75h-1.64zM970.60 433.25h1.64v1.75h-1.64zM974.74 432.75h1.64v1.75h-1.64zM978.88 432.25h1.64v1.75h-1.64zM983.02 433.25h1.64v1.75h-1.64zM987.16 432.25h1.64v1.75h-1.64zM991.30 432.25h1.64v1.75h-1.64zM994.41 432.75h1.64v1.75h-1.64zM997.52 433.25h1.64v1.75h-1.64zM1001.45 433.25h1.64v1.75h-1.64z" fill="#00ff00"/>
<rect x="224.80" y="381.10" width="1.9" height="1.9" fill="#b01a0a"/>
</g>
<rect x="108.5" y="460.55" width="897.70" height="66.35" fill="#000"/>
<line x1="108.5" x2="1006.2" y1="470.45" y2="470.45" stroke="#848484" stroke-width="0.62" stroke-dasharray="1.75 1.45"/>
<line x1="105.3" x2="108.5" y1="470.45" y2="470.45" stroke="#151515" stroke-width="0.65"/>
<text x="103.9" y="472.55" text-anchor="end" fill="#303038">60</text>
<line x1="108.5" x2="1006.2" y1="491.5" y2="491.5" stroke="#848484" stroke-width="0.62" stroke-dasharray="1.75 1.45"/>
<line x1="105.3" x2="108.5" y1="491.5" y2="491.5" stroke="#151515" stroke-width="0.65"/>
<text x="103.9" y="493.60" text-anchor="end" fill="#303038">40</text>
<line x1="108.5" x2="1006.2" y1="512.45" y2="512.45" stroke="#848484" stroke-width="0.62" stroke-dasharray="1.75 1.45"/>
<line x1="105.3" x2="108.5" y1="512.45" y2="512.45" stroke="#151515" stroke-width="0.65"/>
<text x="103.9" y="514.55" text-anchor="end" fill="#303038">20</text>
<line x1="118.60" x2="118.60" y1="526.90" y2="530.10" stroke="#1c1c1c" stroke-width="0.75"/>
<text x="118.60" y="536.30" text-anchor="middle" fill="#303038">930.0</text>
<line x1="151.95" x2="151.95" y1="526.90" y2="528.80" stroke="#383838" stroke-width="0.6"/>
<line x1="185.30" x2="185.30" y1="526.90" y2="528.80" stroke="#383838" stroke-width="0.6"/>
<line x1="218.65" x2="218.65" y1="526.90" y2="528.80" stroke="#383838" stroke-width="0.6"/>
<line x1="252.00" x2="252.00" y1="526.90" y2="528.80" stroke="#383838" stroke-width="0.6"/>
<line x1="285.35" x2="285.35" y1="526.90" y2="530.10" stroke="#1c1c1c" stroke-width="0.75"/>
<text x="285.35" y="536.30" text-anchor="middle" fill="#303038">935.0</text>
<line x1="318.70" x2="318.70" y1="526.90" y2="528.80" stroke="#383838" stroke-width="0.6"/>
<line x1="352.05" x2="352.05" y1="526.90" y2="528.80" stroke="#383838" stroke-width="0.6"/>
<line x1="385.40" x2="385.40" y1="526.90" y2="528.80" stroke="#383838" stroke-width="0.6"/>
<line x1="418.75" x2="418.75" y1="526.90" y2="528.80" stroke="#383838" stroke-width="0.6"/>
<line x1="452.10" x2="452.10" y1="526.90" y2="530.10" stroke="#1c1c1c" stroke-width="0.75"/>
<text x="452.10" y="536.30" text-anchor="middle" fill="#303038">940.0</text>
<line x1="485.45" x2="485.45" y1="526.90" y2="528.80" stroke="#383838" stroke-width="0.6"/>
<line x1="518.80" x2="518.80" y1="526.90" y2="528.80" stroke="#383838" stroke-width="0.6"/>
<line x1="552.15" x2="552.15" y1="526.90" y2="528.80" stroke="#383838" stroke-width="0.6"/>
<line x1="585.50" x2="585.50" y1="526.90" y2="528.80" stroke="#383838" stroke-width="0.6"/>
<line x1="618.85" x2="618.85" y1="526.90" y2="530.10" stroke="#1c1c1c" stroke-width="0.75"/>
<text x="618.85" y="536.30" text-anchor="middle" fill="#303038">945.0</text>
<line x1="652.20" x2="652.20" y1="526.90" y2="528.80" stroke="#383838" stroke-width="0.6"/>
<line x1="685.55" x2="685.55" y1="526.90" y2="528.80" stroke="#383838" stroke-width="0.6"/>
<line x1="718.90" x2="718.90" y1="526.90" y2="528.80" stroke="#383838" stroke-width="0.6"/>
<line x1="752.25" x2="752.25" y1="526.90" y2="528.80" stroke="#383838" stroke-width="0.6"/>
<line x1="785.60" x2="785.60" y1="526.90" y2="530.10" stroke="#1c1c1c" stroke-width="0.75"/>
<text x="785.60" y="536.30" text-anchor="middle" fill="#303038">950.0</text>
<line x1="818.95" x2="818.95" y1="526.90" y2="528.80" stroke="#383838" stroke-width="0.6"/>
<line x1="852.30" x2="852.30" y1="526.90" y2="528.80" stroke="#383838" stroke-width="0.6"/>
<line x1="885.65" x2="885.65" y1="526.90" y2="528.80" stroke="#383838" stroke-width="0.6"/>
<line x1="919.00" x2="919.00" y1="526.90" y2="528.80" stroke="#383838" stroke-width="0.6"/>
<line x1="952.35" x2="952.35" y1="526.90" y2="530.10" stroke="#1c1c1c" stroke-width="0.75"/>
<text x="952.35" y="536.30" text-anchor="middle" fill="#303038">955.0</text>
<line x1="985.70" x2="985.70" y1="526.90" y2="528.80" stroke="#383838" stroke-width="0.6"/>
<text x="108.2" y="457.95" font-size="6.6" fill="#303038" textLength="61.5" lengthAdjust="spacingAndGlyphs">Throttle Position #1 (%)</text>
<text x="1005.90" y="458.55" font-size="6.6" text-anchor="end" fill="#303038" textLength="127" lengthAdjust="spacingAndGlyphs">Throttle Position #1 (%)=37.6, Time=933.219s</text>
<clipPath id="cp5"><rect x="108.5" y="460.55" width="897.70" height="66.35"/></clipPath>
<g clip-path="url(#cp5)">
<polyline points="108.75,515.5 113.75,514.5 117.5,513.5 121.75,516.5 125.75,516.5 130.0,517.5 134.25,516.5 138.25,514.5 141.25,512.5 144.25,509.5 148.0,504.5 152.0,502.5 155.5,501.5 160.0,501.5 163.75,497.5 167.5,497.5 171.75,496.5 175.75,492.5 180.0,487.5 184.0,487.5 186.25,488.5 190.0,488.5 193.75,489.5 197.5,489.5 201.5,494.5 205.75,496.5 210.0,496.5 213.75,498.5 218.0,497.5 222.0,495.5 225.75,494.5 229.0,495.5 233.0,500.5 236.5,507.5 240.5,513.5 245.0,516.5 249.0,517.5 253.0,518.5 257.5,518.5 350.0,518.5 352.5,516.5 356.0,513.5 357.25,511.5 360.5,504.5 364.0,496.5 368.0,484.5 372.25,483.5 376.0,483.5 380.25,484.5 384.25,483.5 388.0,482.5 391.5,481.5 395.25,480.5 398.5,481.5 402.75,480.5 406.5,485.5 409.25,504.5 413.5,511.5 417.25,516.5 421.5,517.5 425.5,518.5 429.75,518.5 546.0,518.5 549.75,518.5 557.25,518.5 561.0,518.5 565.5,518.5 569.75,518.5 576.0,518.5 580.25,518.5 584.75,518.5 588.5,518.5 593.5,518.5 612.0,518.5 621.5,518.5 625.75,517.5 630.0,515.5 634.5,512.5 638.25,511.5 642.0,510.5 646.25,510.5 650.25,509.5 654.0,507.5 657.0,504.5 660.0,503.5 663.75,501.5 667.5,500.5 672.0,496.5 675.75,497.5 679.5,498.5 683.75,497.5 687.75,498.5 692.0,497.5 696.5,498.5 699.5,498.5 702.75,498.5 706.5,495.5 711.5,500.5 715.0,511.5 719.0,515.5 723.25,517.5 727.0,518.5 731.5,518.5 735.75,518.5 810.75,518.5 812.0,518.5 815.11,516.5 818.21,515.5 822.35,514.5 825.87,512.5 829.6,510.5 832.91,508.5 836.84,508.5 840.99,507.5 845.13,507.5 848.85,507.5 851.96,507.5 856.51,503.5 860.24,499.5 863.76,496.5 867.49,496.5 871.42,496.5 875.15,495.5 879.29,495.5 883.01,494.5 886.53,494.5 890.67,495.5 894.82,496.5 898.54,496.5 902.48,496.5 906.2,497.5 909.31,498.5 912.62,495.5 916.97,505.5 921.11,510.5 925.46,515.5 929.6,517.5 933.33,518.5 937.26,518.5 971.42,518.5 975.56,517.5 1002.48,517.5 1006.2,518.5" fill="none" stroke="#00f000" stroke-width="0.56" stroke-linejoin="round"/>
<path d="M112.93 513.25h1.64v1.75h-1.64zM116.68 512.25h1.64v1.75h-1.64zM120.93 515.25h1.64v1.75h-1.64zM124.93 515.25h1.64v1.75h-1.64zM129.18 516.25h1.64v1.75h-1.64zM133.43 515.25h1.64v1.75h-1.64zM137.43 513.25h1.64v1.75h-1.64zM140.43 511.25h1.64v1.75h-1.64zM143.43 508.25h1.64v1.75h-1.64zM147.18 503.25h1.64v1.75h-1.64zM151.18 501.25h1.64v1.75h-1.64zM154.68 500.25h1.64v1.75h-1.64zM159.18 500.25h1.64v1.75h-1.64zM162.93 496.25h1.64v1.75h-1.64zM166.68 496.25h1.64v1.75h-1.64zM170.93 495.25h1.64v1.75h-1.64zM174.93 491.25h1.64v1.75h-1.64zM179.18 486.25h1.64v1.75h-1.64zM183.18 486.25h1.64v1.75h-1.64zM189.18 487.25h1.64v1.75h-1.64zM192.93 488.25h1.64v1.75h-1.64zM196.68 488.25h1.64v1.75h-1.64zM200.68 493.25h1.64v1.75h-1.64zM204.93 495.25h1.64v1.75h-1.64zM209.18 495.25h1.64v1.75h-1.64zM212.93 497.25h1.64v1.75h-1.64zM217.18 496.25h1.64v1.75h-1.64zM221.18 494.25h1.64v1.75h-1.64zM228.18 494.25h1.64v1.75h-1.64zM232.18 499.25h1.64v1.75h-1.64zM235.68 506.25h1.64v1.75h-1.64zM239.68 512.25h1.64v1.75h-1.64zM244.18 515.25h1.64v1.75h-1.64zM248.18 516.25h1.64v1.75h-1.64zM252.18 517.25h1.64v1.75h-1.64zM256.68 517.25h1.64v1.75h-1.64zM260.53 517.25h1.64v1.75h-1.64zM264.39 517.25h1.64v1.75h-1.64zM268.24 517.25h1.64v1.75h-1.64zM272.10 517.25h1.64v1.75h-1.64zM275.95 517.25h1.64v1.75h-1.64zM279.81 517.25h1.64v1.75h-1.64zM283.66 517.25h1.64v1.75h-1.64zM287.51 517.25h1.64v1.75h-1.64zM291.37 517.25h1.64v1.75h-1.64zM295.22 517.25h1.64v1.75h-1.64zM299.08 517.25h1.64v1.75h-1.64zM302.93 517.25h1.64v1.75h-1.64zM306.78 517.25h1.64v1.75h-1.64zM310.64 517.25h1.64v1.75h-1.64zM314.49 517.25h1.64v1.75h-1.64zM318.35 517.25h1.64v1.75h-1.64zM322.20 517.25h1.64v1.75h-1.64zM326.06 517.25h1.64v1.75h-1.64zM329.91 517.25h1.64v1.75h-1.64zM333.76 517.25h1.64v1.75h-1.64zM337.62 517.25h1.64v1.75h-1.64zM341.47 517.25h1.64v1.75h-1.64zM345.33 517.25h1.64v1.75h-1.64zM349.18 517.25h1.64v1.75h-1.64zM355.18 512.25h1.64v1.75h-1.64zM359.68 503.25h1.64v1.75h-1.64zM363.18 495.25h1.64v1.75h-1.64zM367.18 483.25h1.64v1.75h-1.64zM371.43 482.25h1.64v1.75h-1.64zM375.18 482.25h1.64v1.75h-1.64zM379.43 483.25h1.64v1.75h-1.64zM383.43 482.25h1.64v1.75h-1.64zM387.18 481.25h1.64v1.75h-1.64zM390.68 480.25h1.64v1.75h-1.64zM394.43 479.25h1.64v1.75h-1.64zM397.68 480.25h1.64v1.75h-1.64zM401.93 479.25h1.64v1.75h-1.64zM405.68 484.25h1.64v1.75h-1.64zM408.43 503.25h1.64v1.75h-1.64zM412.68 510.25h1.64v1.75h-1.64zM416.43 515.25h1.64v1.75h-1.64zM420.68 516.25h1.64v1.75h-1.64zM424.68 517.25h1.64v1.75h-1.64zM428.93 517.25h1.64v1.75h-1.64zM432.81 517.25h1.64v1.75h-1.64zM436.68 517.25h1.64v1.75h-1.64zM440.56 517.25h1.64v1.75h-1.64zM444.43 517.25h1.64v1.75h-1.64zM448.31 517.25h1.64v1.75h-1.64zM452.18 517.25h1.64v1.75h-1.64zM456.06 517.25h1.64v1.75h-1.64zM459.93 517.25h1.64v1.75h-1.64zM463.81 517.25h1.64v1.75h-1.64zM467.68 517.25h1.64v1.75h-1.64zM471.56 517.25h1.64v1.75h-1.64zM475.43 517.25h1.64v1.75h-1.64zM479.31 517.25h1.64v1.75h-1.64zM483.18 517.25h1.64v1.75h-1.64zM487.06 517.25h1.64v1.75h-1.64zM490.93 517.25h1.64v1.75h-1.64zM494.81 517.25h1.64v1.75h-1.64zM498.68 517.25h1.64v1.75h-1.64zM502.56 517.25h1.64v1.75h-1.64zM506.43 517.25h1.64v1.75h-1.64zM510.31 517.25h1.64v1.75h-1.64zM514.18 517.25h1.64v1.75h-1.64zM518.05 517.25h1.64v1.75h-1.64zM521.93 517.25h1.64v1.75h-1.64zM525.80 517.25h1.64v1.75h-1.64zM529.68 517.25h1.64v1.75h-1.64zM533.55 517.25h1.64v1.75h-1.64zM537.43 517.25h1.64v1.75h-1.64zM541.30 517.25h1.64v1.75h-1.64zM545.18 517.25h1.64v1.75h-1.64zM548.93 517.25h1.64v1.75h-1.64zM552.68 517.25h1.64v1.75h-1.64zM556.43 517.25h1.64v1.75h-1.64zM560.18 517.25h1.64v1.75h-1.64zM564.68 517.25h1.64v1.75h-1.64zM568.93 517.25h1.64v1.75h-1.64zM572.05 517.25h1.64v1.75h-1.64zM575.18 517.25h1.64v1.75h-1.64zM579.43 517.25h1.64v1.75h-1.64zM583.93 517.25h1.64v1.75h-1.64zM587.68 517.25h1.64v1.75h-1.64zM592.68 517.25h1.64v1.75h-1.64zM596.38 517.25h1.64v1.75h-1.64zM600.08 517.25h1.64v1.75h-1.64zM603.78 517.25h1.64v1.75h-1.64zM607.48 517.25h1.64v1.75h-1.64zM611.18 517.25h1.64v1.75h-1.64zM615.93 517.25h1.64v1.75h-1.64zM620.68 517.25h1.64v1.75h-1.64zM624.93 516.25h1.64v1.75h-1.64zM629.18 514.25h1.64v1.75h-1.64zM633.68 511.25h1.64v1.75h-1.64zM637.43 510.25h1.64v1.75h-1.64zM641.18 509.25h1.64v1.75h-1.64zM645.43 509.25h1.64v1.75h-1.64zM649.43 508.25h1.64v1.75h-1.64zM653.18 506.25h1.64v1.75h-1.64zM656.18 503.25h1.64v1.75h-1.64zM659.18 502.25h1.64v1.75h-1.64zM662.93 500.25h1.64v1.75h-1.64zM666.68 499.25h1.64v1.75h-1.64zM671.18 495.25h1.64v1.75h-1.64zM674.93 496.25h1.64v1.75h-1.64zM678.68 497.25h1.64v1.75h-1.64zM682.93 496.25h1.64v1.75h-1.64zM686.93 497.25h1.64v1.75h-1.64zM691.18 496.25h1.64v1.75h-1.64zM695.68 497.25h1.64v1.75h-1.64zM698.68 497.25h1.64v1.75h-1.64zM701.93 497.25h1.64v1.75h-1.64zM705.68 494.25h1.64v1.75h-1.64zM710.68 499.25h1.64v1.75h-1.64zM714.18 510.25h1.64v1.75h-1.64zM718.18 514.25h1.64v1.75h-1.64zM722.43 516.25h1.64v1.75h-1.64zM726.18 517.25h1.64v1.75h-1.64zM730.68 517.25h1.64v1.75h-1.64zM734.93 517.25h1.64v1.75h-1.64zM738.88 517.25h1.64v1.75h-1.64zM742.82 517.25h1.64v1.75h-1.64zM746.77 517.25h1.64v1.75h-1.64zM750.72 517.25h1.64v1.75h-1.64zM754.67 517.25h1.64v1.75h-1.64zM758.61 517.25h1.64v1.75h-1.64zM762.56 517.25h1.64v1.75h-1.64zM766.51 517.25h1.64v1.75h-1.64zM770.46 517.25h1.64v1.75h-1.64zM774.40 517.25h1.64v1.75h-1.64zM778.35 517.25h1.64v1.75h-1.64zM782.30 517.25h1.64v1.75h-1.64zM786.25 517.25h1.64v1.75h-1.64zM790.19 517.25h1.64v1.75h-1.64zM794.14 517.25h1.64v1.75h-1.64zM798.09 517.25h1.64v1.75h-1.64zM802.04 517.25h1.64v1.75h-1.64zM805.98 517.25h1.64v1.75h-1.64zM809.93 517.25h1.64v1.75h-1.64zM814.29 515.25h1.64v1.75h-1.64zM817.39 514.25h1.64v1.75h-1.64zM821.53 513.25h1.64v1.75h-1.64zM825.05 511.25h1.64v1.75h-1.64zM828.78 509.25h1.64v1.75h-1.64zM832.09 507.25h1.64v1.75h-1.64zM836.02 507.25h1.64v1.75h-1.64zM840.17 506.25h1.64v1.75h-1.64zM844.31 506.25h1.64v1.75h-1.64zM848.03 506.25h1.64v1.75h-1.64zM851.14 506.25h1.64v1.75h-1.64zM855.69 502.25h1.64v1.75h-1.64zM859.42 498.25h1.64v1.75h-1.64zM862.94 495.25h1.64v1.75h-1.64zM866.67 495.25h1.64v1.75h-1.64zM870.60 495.25h1.64v1.75h-1.64zM874.33 494.25h1.64v1.75h-1.64zM878.47 494.25h1.64v1.75h-1.64zM882.19 493.25h1.64v1.75h-1.64zM885.71 493.25h1.64v1.75h-1.64zM889.85 494.25h1.64v1.75h-1.64zM894.00 495.25h1.64v1.75h-1.64zM897.72 495.25h1.64v1.75h-1.64zM901.66 495.25h1.64v1.75h-1.64zM905.38 496.25h1.64v1.75h-1.64zM908.49 497.25h1.64v1.75h-1.64zM911.80 494.25h1.64v1.75h-1.64zM916.15 504.25h1.64v1.75h-1.64zM920.29 509.25h1.64v1.75h-1.64zM924.64 514.25h1.64v1.75h-1.64zM928.78 516.25h1.64v1.75h-1.64zM932.51 517.25h1.64v1.75h-1.64zM936.44 517.25h1.64v1.75h-1.64zM940.24 517.25h1.64v1.75h-1.64zM944.03 517.25h1.64v1.75h-1.64zM947.83 517.25h1.64v1.75h-1.64zM951.62 517.25h1.64v1.75h-1.64zM955.42 517.25h1.64v1.75h-1.64zM959.21 517.25h1.64v1.75h-1.64zM963.01 517.25h1.64v1.75h-1.64zM966.80 517.25h1.64v1.75h-1.64zM970.60 517.25h1.64v1.75h-1.64zM974.74 516.25h1.64v1.75h-1.64zM978.59 516.25h1.64v1.75h-1.64zM982.43 516.25h1.64v1.75h-1.64zM986.28 516.25h1.64v1.75h-1.64zM990.12 516.25h1.64v1.75h-1.64zM993.97 516.25h1.64v1.75h-1.64zM997.81 516.25h1.64v1.75h-1.64zM1001.66 516.25h1.64v1.75h-1.64z" fill="#00ff00"/>
<rect x="224.80" y="493.10" width="1.9" height="1.9" fill="#b01a0a"/>
</g>
</svg>
</body></html>
